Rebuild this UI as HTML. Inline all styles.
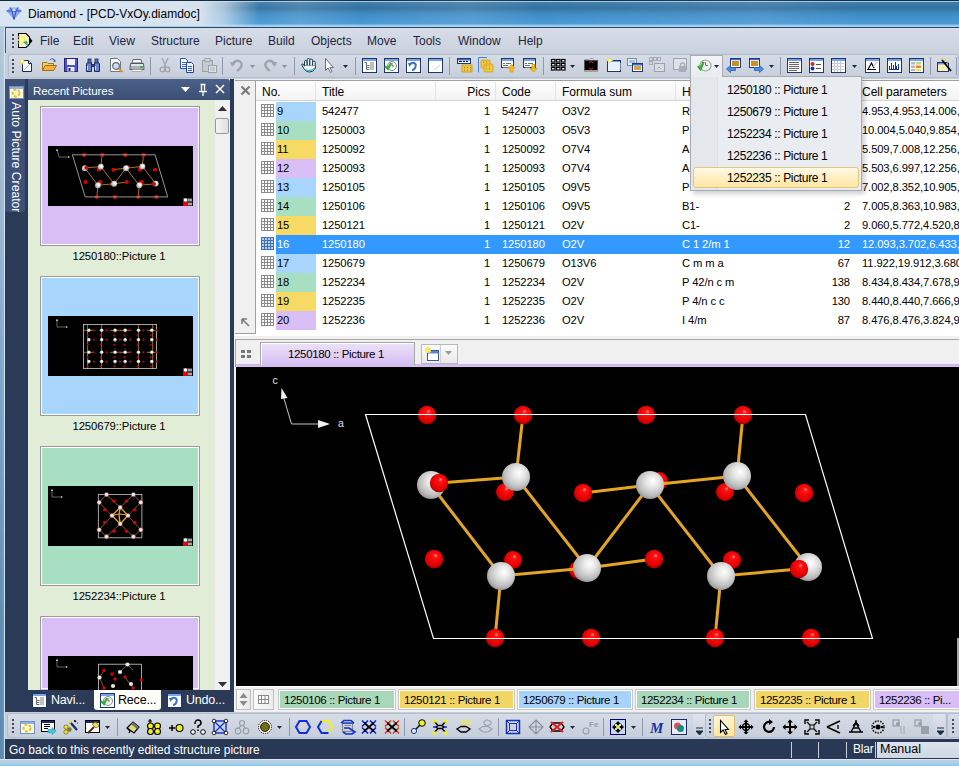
<!DOCTYPE html><html><head><meta charset="utf-8"><style>
*{margin:0;padding:0;box-sizing:border-box}
html,body{width:959px;height:766px;overflow:hidden;background:#2a3a57;font-family:"Liberation Sans",sans-serif;font-size:12px;color:#000}
.a{position:absolute}
svg{position:absolute;overflow:visible}
#title{left:0;top:0;width:959px;height:27px;background:linear-gradient(90deg,rgba(255,255,255,0) 250px,rgba(255,255,255,0.12) 300px,rgba(255,255,255,0) 360px,rgba(255,255,255,0.1) 470px,rgba(255,255,255,0) 540px,rgba(255,255,255,0.08) 760px,rgba(255,255,255,0) 860px),linear-gradient(180deg,#1a2a3a 0px,#1a2a3a 1px,#9acbe8 1px,#9acbe8 2px,#3f80ae 2px,#33729e 8px,#3f8cc4 14px,#4a9ad8 24px,#8cc4ec 25px,#a8d8f8 27px)}
#tglow{left:0;top:1px;width:260px;height:25px;background:linear-gradient(90deg,#d9e5f0 0px,#d6e3ef 200px,rgba(214,227,239,0.7) 225px,rgba(214,227,239,0) 260px)}


#title .t{left:28px;top:7px;font-size:12px;color:#000}
#frameL{left:0;top:27px;width:5px;height:739px;background:linear-gradient(90deg,rgba(255,255,255,0) 0px,rgba(255,255,255,0.08) 3.5px,#d4e8f8 4px,#c8e0f4 5px),linear-gradient(180deg,#b4c8da 0px,#a4bcd2 120px,#7ea4c6 350px,#5e8ab2 600px,#5a88b0 739px)}
#frameB{left:0;top:759px;width:959px;height:7px;background:linear-gradient(180deg,#d8e6f2 0px,#d8e6f2 1px,#bcd0e2 1px,#b4cce0 4px,#8ed0f2 6px,#7cc8ee 7px)}
#menubar{left:5px;top:27px;width:954px;height:26px;background:linear-gradient(180deg,#d8dee8,#c9d1dd);border-top:1px solid #34445f}
#menubar span{position:absolute;top:6px;color:#1b2740;font-size:12px}
#tb1{left:5px;top:53px;width:954px;height:26px;background:#c5cdda}
.tbar{border-radius:3px;background:linear-gradient(180deg,#d6dce6,#c7cfdb);border:1px solid #b4bdcb}
.grip{width:2px;height:2px;background:#3e4b60;box-shadow:0 4px #3e4b60,0 8px #3e4b60,0 12px #3e4b60}
.sep{width:1px;background:#8e9aac}
#left{left:28px;top:79px;width:202px;height:611px;background:#e1edd6}
#lhdr{left:28px;top:79px;width:202px;height:21px;background:linear-gradient(180deg,#4b6088,#3c5075);border-radius:0 3px 0 0}
#lhdr .t{left:5px;top:5px;color:#fff;font-size:11.6px;letter-spacing:-0.1px}
.card{width:160px;height:140px;border:1px solid #9a9a9a;outline:1px solid #fff;outline-offset:-2px}
.cap{width:160px;text-align:center;font-size:11.3px;letter-spacing:-0.1px;color:#000}
#lscroll{left:214px;top:100px;width:16px;height:590px;background:#f0f0f0;border-left:1px solid #e6e6e6}
#ltabs{left:28px;top:690px;width:202px;height:21px}
#doc{left:234px;top:79px;width:725px;height:633px;background:#f0f0f0}
#tbl{left:235px;top:80px;width:724px;height:256px;background:#fff;border-top:1px solid #a0a0a0}
.rt{font-size:11.2px;letter-spacing:-0.1px;white-space:nowrap}
.row span{position:absolute;top:3px}
.hd{position:absolute;top:81px;height:19px;font-size:12px;color:#000;}
#pic{left:236px;top:367px;width:723px;height:319px;background:#000}
#status{left:5px;top:739px;width:954px;height:20px;background:#283855}
#status .t{left:4px;top:4px;color:#fff;font-size:12px}
#tb2{left:5px;top:712px;width:954px;height:27px;background:#c5cdda}
</style></head><body>
<div id="title" class="a"><div id="tglow" class="a"></div><div class="t a">Diamond - [PCD-VxOy.diamdoc]</div></div>
<svg style="left:6px;top:7px" width="16" height="13" viewBox="0 0 16 13"><path d="M0.5 4L4 0.5H12L15.5 4L8 12.5Z" fill="#8aa8f0"/><path d="M0.5 4H15.5M4 0.5L6 4L8 12.5L10 4L12 0.5" stroke="#3050c8" stroke-width="1" fill="none"/><path d="M6 4L8 1L10 4" fill="#d8e4ff"/></svg>
<div id="frameL" class="a"></div>
<div id="menubar" class="a">
<span style="left:35px">File</span>
<span style="left:68px">Edit</span>
<span style="left:104px">View</span>
<span style="left:146px">Structure</span>
<span style="left:210px">Picture</span>
<span style="left:263px">Build</span>
<span style="left:306px">Objects</span>
<span style="left:362px">Move</span>
<span style="left:408px">Tools</span>
<span style="left:453px">Window</span>
<span style="left:513px">Help</span>
</div>
<div class="a" style="left:5px;top:27px;width:1px;height:26px;background:#4a5670"></div>
<div class="a grip" style="left:12px;top:34px"></div>
<svg style="left:17px;top:32px" width="16" height="16" viewBox="0 0 16 16"><path d="M1.5 1.5H9L12.5 5V12L9 15.5H1.5Z" fill="#f8f4d8" stroke="#000" stroke-width="1.1"/><path d="M12.5 5L15.5 9L12 13" fill="#000"/><path d="M5 3V13M0 8H10M1.5 4.5L8.5 11.5M8.5 4.5L1.5 11.5" stroke="#f8f040" stroke-width="1.3"/><circle cx="5" cy="8" r="2.2" fill="#fffbb0"/><path d="M6 10L11 14L10 9Z" fill="#30a0a0"/></svg>
<div id="tb1" class="a"><div class="tbar a" style="left:3px;top:1px;width:951px;height:24px"></div></div>
<div class="a grip" style="left:12px;top:59px"></div>
<svg style="left:18px;top:57px" width="16" height="16" viewBox="0 0 16 16"><path d="M4.5 3.5H10.5L13.5 6.5V14.5H4.5Z" fill="#f4f6fb" stroke="#202a50"/><path d="M10.5 3.5V6.5H13.5" fill="#c8d0e8" stroke="#202a50"/><path d="M6 13L12 7" stroke="#b0b8d8"/><path d="M4.20 4.20L7.40 4.20M4.20 4.20L5.78 5.78M4.20 4.20L4.20 7.40M4.20 4.20L2.62 5.78M4.20 4.20L1.00 4.20M4.20 4.20L2.62 2.62M4.20 4.20L4.20 1.00M4.20 4.20L5.78 2.62" stroke="#f4e040" stroke-width="1.1"/><circle cx="4.2" cy="4.2" r="1.4" fill="#fffbc0"/></svg>
<svg style="left:41px;top:57px" width="16" height="16" viewBox="0 0 16 16"><path d="M1.5 5.5H6L7 6.5H12.5V13.5H1.5Z" fill="#f0d070" stroke="#a07818"/><path d="M1.5 13.5L4 8.5H15.5L12.5 13.5Z" fill="#f6b040" stroke="#a07018"/><path d="M9 3Q12 0 14 4" fill="none" stroke="#3060b0"/><path d="M13 2L15 4.5L12.5 5Z" fill="#3060b0"/></svg>
<svg style="left:63px;top:57px" width="16" height="16" viewBox="0 0 16 16"><rect x="1.5" y="1.5" width="13" height="13" fill="#5050c8" stroke="#282878"/><rect x="4" y="2" width="8" height="6" fill="#f0f0f8"/><rect x="4.5" y="10" width="7" height="4.5" fill="#e8e8f0"/><rect x="5.5" y="11" width="2" height="3" fill="#282878"/></svg>
<svg style="left:85px;top:57px" width="16" height="16" viewBox="0 0 16 16"><path d="M2.5 5.5H6.5V14.5H1.5V7Z M9.5 5.5H13.5L14.5 7V14.5H9.5Z" fill="#6888c8" stroke="#1a2a68"/><rect x="3" y="2" width="3" height="4" fill="#5070b8" stroke="#1a2a68" stroke-width="0.8"/><rect x="10" y="2" width="3" height="4" fill="#5070b8" stroke="#1a2a68" stroke-width="0.8"/><rect x="6.5" y="7" width="3" height="3" fill="#2a3a78"/><path d="M2.5 9V13M10.5 9V13" stroke="#d8e4f8"/></svg>
<svg style="left:108px;top:57px" width="16" height="16" viewBox="0 0 16 16"><path d="M2.5 1.5H9.5L12.5 4.5V14.5H2.5Z" fill="#fafafa" stroke="#707888"/><circle cx="8" cy="9" r="3.3" fill="#d0e0f0" stroke="#606878" stroke-width="1.2"/><path d="M10.5 11.5L14.5 15" stroke="#d89030" stroke-width="2"/></svg>
<svg style="left:129px;top:57px" width="16" height="16" viewBox="0 0 16 16"><path d="M4 2.5H12L13 6H3Z" fill="#f8f8f8" stroke="#606870"/><path d="M1.5 6.5H14.5L15 12.5H1Z" fill="#e0e4ea" stroke="#505860"/><rect x="2" y="9" width="12" height="3" fill="#a8b0b8"/><rect x="11" y="9" width="2.5" height="2" fill="#30b030"/><rect x="3" y="12.5" width="10" height="2" fill="#fff" stroke="#808890" stroke-width="0.6"/></svg>
<svg style="left:157px;top:57px" width="16" height="16" viewBox="0 0 16 16"><path d="M5 1L9 10M11 1L7 10" stroke="#a0a4a8" stroke-width="1.3"/><circle cx="5.5" cy="12.5" r="2.3" fill="none" stroke="#a0a4a8" stroke-width="1.3"/><circle cx="10.5" cy="12.5" r="2.3" fill="none" stroke="#a0a4a8" stroke-width="1.3"/></svg>
<svg style="left:179px;top:57px" width="16" height="16" viewBox="0 0 16 16"><path d="M1.5 1.5H6.5L8.5 3.5V11.5H1.5Z" fill="#f8f8ff" stroke="#3050a0"/><path d="M3 5.5H7M3 7.5H7M3 9.5H7" stroke="#4070c0"/><path d="M7.5 5.5H12.5L14.5 7.5V15.5H7.5Z" fill="#f0f4ff" stroke="#2040a0"/><path d="M9 9.5H13M9 11.5H13M9 13.5H13" stroke="#3060c0"/></svg>
<svg style="left:201px;top:57px" width="16" height="16" viewBox="0 0 16 16"><rect x="1.5" y="3.5" width="10" height="11" fill="#c8ccd2" stroke="#9aa0a8"/><rect x="4" y="1.5" width="5" height="3" fill="#d8dce0" stroke="#9aa0a8"/><rect x="7.5" y="8.5" width="8" height="7" fill="#e0e4e8" stroke="#9aa0a8"/><path d="M9 11H14M9 13H14" stroke="#a8aeb6"/></svg>
<svg style="left:229px;top:57px" width="16" height="16" viewBox="0 0 16 16"><path d="M4 8Q5 3 10 4Q14 6 12 10Q10 13 8 14" fill="none" stroke="#a0a6ae" stroke-width="2.4"/><path d="M1 5L7 5L3 10Z" fill="#a0a6ae"/></svg>
<svg style="left:262px;top:57px" width="16" height="16" viewBox="0 0 16 16"><path d="M12 8Q11 3 6 4Q2 6 4 10Q6 13 8 14" fill="none" stroke="#a0a6ae" stroke-width="2.4"/><path d="M15 5L9 5L13 10Z" fill="#a0a6ae"/></svg>
<svg style="left:301px;top:57px" width="16" height="16" viewBox="0 0 16 16"><g fill="#f8f6ea" stroke="#0a3a5a" stroke-width="1"><rect x="3.5" y="3.5" width="2.6" height="8" rx="1.3"/><rect x="6.2" y="1.5" width="2.6" height="9" rx="1.3"/><rect x="8.9" y="2" width="2.6" height="9" rx="1.3"/><rect x="11.6" y="4" width="2.6" height="8" rx="1.3"/><path d="M3.5 9L1.8 7Q0.6 6.6 0.8 8L3.5 12.5Q5 15 8.5 15Q13 15 14.2 11V9H3.5Z"/></g><path d="M4 9.5H14" stroke="#f8f6ea" stroke-width="1.6"/><path d="M4 12.5Q8 15.5 13.5 11.5" stroke="#30b8d8" stroke-width="1.4" fill="none"/></svg>
<svg style="left:321px;top:57px" width="16" height="16" viewBox="0 0 16 16"><path d="M4.5 1.5V13.5L7 11L9.5 15.5L11 14.5L9 10.5H12.5Z" fill="#f8f8f8" stroke="#6a7078"/></svg>
<svg style="left:361px;top:57px" width="16" height="16" viewBox="0 0 16 16"><rect x="1.5" y="1.5" width="14" height="14" fill="#ffffff" stroke="#20356a"/><rect x="2" y="2" width="13" height="2" fill="#7aa4e4"/><path d="M3.5 5.5H5.5V12.5H8.5M5.5 8.5H8.5M5.5 10.5H8.5" fill="none" stroke="#707070"/><rect x="9" y="5.5" width="4" height="1" fill="#808080"/><rect x="9" y="7.5" width="4" height="1" fill="#808080"/><rect x="9" y="9.5" width="4" height="1" fill="#808080"/><rect x="9" y="11.5" width="4" height="1" fill="#808080"/></svg>
<svg style="left:383px;top:57px" width="16" height="16" viewBox="0 0 16 16"><rect x="1.5" y="1.5" width="14" height="14" fill="#ffffff" stroke="#20356a"/><rect x="2" y="2" width="13" height="2" fill="#7aa4e4"/><circle cx="9" cy="9" r="4.5" fill="#f4f4f4" stroke="#909090"/><path d="M9 6V9H11" stroke="#707070" fill="none"/><path d="M2 9L5 12L8 6" stroke="#30b030" stroke-width="2.2" fill="none"/></svg>
<svg style="left:405px;top:57px" width="16" height="16" viewBox="0 0 16 16"><rect x="1.5" y="1.5" width="14" height="14" fill="#ffffff" stroke="#20356a"/><rect x="2" y="2" width="13" height="2" fill="#7aa4e4"/><path d="M5 8Q6 5 9 6Q12 7 10 11Q9 13 7 13" fill="none" stroke="#3a70c8" stroke-width="2"/><path d="M3 6L7 6L4.5 10Z" fill="#3a70c8"/></svg>
<svg style="left:427px;top:57px" width="16" height="16" viewBox="0 0 16 16"><rect x="1.5" y="1.5" width="14" height="14" fill="#ffffff" stroke="#20356a"/><rect x="2" y="2" width="13" height="2" fill="#7aa4e4"/><path d="M7 13L13 8" stroke="#c8ccd8"/></svg>
<svg style="left:456px;top:57px" width="16" height="16" viewBox="0 0 16 16"><rect x="1.5" y="1.5" width="13" height="5" fill="#fff" stroke="#1e3a78"/><rect x="2" y="2" width="12" height="1.5" fill="#3a6fd0"/><path d="M3 4.5H6M7 4.5H9M10 4.5H12" stroke="#202020"/><rect x="6" y="8" width="10" height="7" fill="#f0c840" stroke="#c09818" stroke-width="0.8"/><path d="M8 10.5H9M11 10.5H12M14 10.5H15M8 13H9M11 13H12M14 13H15" stroke="#a07010"/></svg>
<svg style="left:478px;top:57px" width="16" height="16" viewBox="0 0 16 16"><path d="M0.5 0.5V15.5" stroke="#4a80e0"/><path d="M0.5 0.5H9" stroke="#4a80e0"/><rect x="3" y="3" width="9" height="8" rx="1" fill="#f0c840" stroke="#d0a020" stroke-width="0.8"/><rect x="6" y="7" width="9" height="8" rx="1" fill="#f0c840" stroke="#d0a020" stroke-width="0.8"/><path d="M5 5H6M8 5H9M8 9H9M11 9H12M8 12H9M11 12H12" stroke="#b08010"/></svg>
<svg style="left:500px;top:57px" width="16" height="16" viewBox="0 0 16 16"><rect x="1.5" y="1.5" width="12" height="9" fill="#ffffff" stroke="#20356a"/><rect x="2" y="2" width="11" height="2" fill="#7aa4e4"/><path d="M3 6.5H5M6 6.5H11M3 8.5H8M3 10.5H8" stroke="#707070"/><path d="M8 11L11.5 7.5L15 11H13V15H10V11Z" fill="#f0c020" stroke="#d09810" stroke-width="0.7"/></svg>
<svg style="left:522px;top:57px" width="16" height="16" viewBox="0 0 16 16"><rect x="1.5" y="1.5" width="12" height="9" fill="#ffffff" stroke="#20356a"/><rect x="2" y="2" width="11" height="2" fill="#7aa4e4"/><path d="M3 6.5H5M6 6.5H11M3 8.5H8M3 10.5H8" stroke="#707070"/><path d="M8 11.5L11.5 15L15 11.5H13V7.5H10V11.5Z" fill="#f0c020" stroke="#d09810" stroke-width="0.7"/></svg>
<svg style="left:550px;top:57px" width="16" height="16" viewBox="0 0 16 16"><rect x="1.5" y="2.5" width="3.5" height="2.5" fill="#fff" stroke="#000" stroke-width="1.2"/><rect x="1.5" y="6.5" width="3.5" height="2.5" fill="#fff" stroke="#000" stroke-width="1.2"/><rect x="1.5" y="10.5" width="3.5" height="2.5" fill="#fff" stroke="#000" stroke-width="1.2"/><rect x="6.5" y="2.5" width="3.5" height="2.5" fill="#fff" stroke="#000" stroke-width="1.2"/><rect x="6.5" y="6.5" width="3.5" height="2.5" fill="#fff" stroke="#000" stroke-width="1.2"/><rect x="6.5" y="10.5" width="3.5" height="2.5" fill="#fff" stroke="#000" stroke-width="1.2"/><rect x="11.5" y="2.5" width="3.5" height="2.5" fill="#fff" stroke="#000" stroke-width="1.2"/><rect x="11.5" y="6.5" width="3.5" height="2.5" fill="#fff" stroke="#000" stroke-width="1.2"/><rect x="11.5" y="10.5" width="3.5" height="2.5" fill="#fff" stroke="#000" stroke-width="1.2"/></svg>
<svg style="left:583px;top:57px" width="16" height="16" viewBox="0 0 16 16"><path d="M1.5 2.5H6L7 1.5H10L11 2.5" fill="#a8c8f0" stroke="#8aa8d0"/><rect x="1.5" y="3.5" width="13" height="10" fill="#000" stroke="#505050"/><rect x="1" y="13" width="14" height="2" fill="#a0a0a0"/><path d="M6 6L8 4.5L10 6M6 11L8 12.5L10 11" stroke="#e02020" fill="none"/></svg>
<svg style="left:606px;top:57px" width="16" height="16" viewBox="0 0 16 16"><rect x="1.5" y="3.5" width="13" height="11" fill="#ffffff" stroke="#20356a"/><rect x="2" y="4" width="12" height="2" fill="#7aa4e4"/><path d="M3 6H14V13" stroke="#c8d8f0" fill="none"/><rect x="2" y="5" width="12" height="8" fill="#e8f0fc"/><path d="M3.50 3.50L6.70 3.50M3.50 3.50L5.08 5.08M3.50 3.50L3.50 6.70M3.50 3.50L1.92 5.08M3.50 3.50L0.30 3.50M3.50 3.50L1.92 1.92M3.50 3.50L3.50 0.30M3.50 3.50L5.08 1.92" stroke="#f4e040" stroke-width="1.1"/><circle cx="3.5" cy="3.5" r="1.4" fill="#fffbc0"/></svg>
<svg style="left:627px;top:57px" width="16" height="16" viewBox="0 0 16 16"><rect x="0.5" y="1.5" width="9" height="7" fill="#e8eef8" stroke="#808890"/><rect x="2" y="3" width="6" height="3" fill="#a0c0e8"/><rect x="5.5" y="6.5" width="10" height="8" fill="#fff" stroke="#1e3a78"/><rect x="6" y="7" width="9" height="1.5" fill="#3a6fd0"/><rect x="7" y="9" width="7" height="4" fill="#d8a040"/></svg>
<svg style="left:649px;top:57px" width="16" height="16" viewBox="0 0 16 16"><g fill="none" stroke="#a8acb2"><rect x="0.5" y="0.5" width="3" height="3"/><rect x="4.5" y="0.5" width="3" height="3"/><rect x="0.5" y="4.5" width="3" height="3"/><rect x="8.5" y="0.5" width="3" height="3"/></g><rect x="5.5" y="6.5" width="10" height="8" fill="#d8dce0" stroke="#9aa0a8"/><path d="M8 12L10 10L12 12" stroke="#a8aeb6" fill="none"/></svg>
<svg style="left:672px;top:57px" width="16" height="16" viewBox="0 0 16 16"><rect x="1.5" y="1.5" width="13" height="11" fill="#dfe2e6" stroke="#a0a6ae"/><rect x="7" y="9" width="7" height="6" fill="#a8aeb6"/><path d="M8.5 9V7Q10.5 5 12.5 7V9" fill="none" stroke="#a8aeb6" stroke-width="1.4"/></svg>
<svg style="left:726px;top:57px" width="16" height="16" viewBox="0 0 16 16"><rect x="4.5" y="1.5" width="10" height="9" fill="#fffbe8" stroke="#1e3a78"/><rect x="5" y="2" width="9" height="1.2" fill="#3a6fd0"/><rect x="6" y="4" width="7" height="5" fill="#c89028"/><path d="M0.5 12L4.5 8.5V10.5H9.5V13.5H4.5V15.5Z" fill="#4a90e0" stroke="#2a60b0" stroke-width="0.8"/></svg>
<svg style="left:748px;top:57px" width="16" height="16" viewBox="0 0 16 16"><rect x="1.5" y="1.5" width="10" height="9" fill="#fffbe8" stroke="#1e3a78"/><rect x="2" y="2" width="9" height="1.2" fill="#3a6fd0"/><rect x="3" y="4" width="7" height="5" fill="#c89028"/><path d="M15.5 12L11.5 8.5V10.5H6.5V13.5H11.5V15.5Z" fill="#4a90e0" stroke="#2a60b0" stroke-width="0.8"/></svg>
<svg style="left:786px;top:57px" width="16" height="16" viewBox="0 0 16 16"><rect x="1.5" y="1.5" width="14" height="14" fill="#ffffff" stroke="#20356a"/><rect x="2" y="2" width="13" height="2" fill="#7aa4e4"/><path d="M3 5.5H13M3 7.5H13M3 9.5H13M3 11.5H13M3 13.5H11" stroke="#686868"/></svg>
<svg style="left:808px;top:57px" width="16" height="16" viewBox="0 0 16 16"><rect x="1.5" y="1.5" width="14" height="14" fill="#ffffff" stroke="#20356a"/><rect x="2" y="2" width="13" height="2" fill="#7aa4e4"/><circle cx="4.5" cy="7" r="2" fill="#e02020"/><circle cx="4.5" cy="11.5" r="2" fill="#1030c0"/><path d="M8 7.5H13M8 11.5H13" stroke="#505050" stroke-width="1.2"/></svg>
<svg style="left:830px;top:57px" width="16" height="16" viewBox="0 0 16 16"><rect x="1.5" y="1.5" width="14" height="14" fill="#fafafc" stroke="#20356a"/><rect x="2" y="2" width="13" height="2" fill="#7aa4e4"/><path d="M2 6.5H14M2 9.5H14M2 12.5H14M4.5 4V15M7.5 4V15M10.5 4V15" stroke="#c8cad8"/></svg>
<svg style="left:864px;top:57px" width="16" height="16" viewBox="0 0 16 16"><rect x="1.5" y="1.5" width="14" height="14" fill="#ffffff" stroke="#20356a"/><rect x="2" y="2" width="13" height="2" fill="#7aa4e4"/><path d="M3 12.5H12M4 12.5L7.5 6L10 11" stroke="#000" fill="none" stroke-width="1.2"/><path d="M9 10L13 5" stroke="#b0b8d0"/></svg>
<svg style="left:886px;top:57px" width="16" height="16" viewBox="0 0 16 16"><rect x="1.5" y="1.5" width="14" height="14" fill="#ffffff" stroke="#20356a"/><rect x="2" y="2" width="13" height="2" fill="#7aa4e4"/><path d="M3 12.5H13M3.5 12V9M5.5 12V6M7.5 12V8M9.5 12V5M10.5 12V9M12.5 12V7" stroke="#1030c0" fill="none"/></svg>
<svg style="left:908px;top:57px" width="16" height="16" viewBox="0 0 16 16"><rect x="1.5" y="1.5" width="14" height="14" fill="#ffffff" stroke="#20356a"/><rect x="2" y="2" width="13" height="2" fill="#7aa4e4"/><rect x="3" y="5" width="4" height="2.5" fill="#b8b8b8"/><rect x="3" y="8.5" width="4" height="2.5" fill="#b8b8b8"/><rect x="3" y="12" width="4" height="2" fill="#b8b8b8"/><rect x="8" y="5" width="5" height="2.5" fill="#b8d890"/><rect x="8" y="8.5" width="5" height="2.5" fill="#f08820"/><rect x="8" y="12" width="5" height="2" fill="#e8e070"/></svg>
<svg style="left:936px;top:57px" width="16" height="16" viewBox="0 0 16 16"><rect x="1.5" y="5.5" width="11" height="9" fill="#f8f0c0" stroke="#1e3a78"/><rect x="2" y="6" width="10" height="1.5" fill="#7090e0"/><path d="M5 12L7 9L9 12L6 10H8Z" fill="#f0e050"/><path d="M6 3L15 14" stroke="#000" stroke-width="1.8"/><circle cx="6" cy="2" r="1" fill="#f0c020"/><circle cx="9" cy="3" r="1" fill="#f0c020"/><circle cx="12" cy="5" r="1" fill="#f0c020"/></svg>
<div class="a sep" style="left:150px;top:57px;height:18px"></div>
<div class="a sep" style="left:222px;top:57px;height:18px"></div>
<div class="a sep" style="left:294px;top:57px;height:18px"></div>
<div class="a sep" style="left:355px;top:57px;height:18px"></div>
<div class="a sep" style="left:449px;top:57px;height:18px"></div>
<div class="a sep" style="left:543px;top:57px;height:18px"></div>
<div class="a sep" style="left:780px;top:57px;height:18px"></div>
<div class="a sep" style="left:930px;top:57px;height:18px"></div>
<div class="a sep" style="left:956px;top:57px;height:18px"></div>
<svg style="left:250px;top:65px" width="5" height="3" viewBox="0 0 5 3"><path d="M0 0H5L2.5 3Z" fill="#8a929c"/></svg>
<svg style="left:282px;top:65px" width="5" height="3" viewBox="0 0 5 3"><path d="M0 0H5L2.5 3Z" fill="#8a929c"/></svg>
<svg style="left:343px;top:65px" width="5" height="3" viewBox="0 0 5 3"><path d="M0 0H5L2.5 3Z" fill="#1a2a48"/></svg>
<svg style="left:570px;top:65px" width="5" height="3" viewBox="0 0 5 3"><path d="M0 0H5L2.5 3Z" fill="#1a2a48"/></svg>
<svg style="left:769px;top:65px" width="5" height="3" viewBox="0 0 5 3"><path d="M0 0H5L2.5 3Z" fill="#1a2a48"/></svg>
<svg style="left:852px;top:65px" width="5" height="3" viewBox="0 0 5 3"><path d="M0 0H5L2.5 3Z" fill="#1a2a48"/></svg>
<div class="a" style="left:5px;top:79px;width:20px;height:133px;background:#3d5077;border-radius:0 0 2px 2px"></div>
<svg style="left:8px;top:84px" width="16" height="16" viewBox="0 0 16 16"><rect x="1.5" y="2.5" width="14" height="12" fill="#fff8e0" stroke="#7090c0"/><rect x="2" y="3" width="13" height="2" fill="#8ab0e8"/><circle cx="8" cy="9" r="3.5" fill="none" stroke="#e8c020" stroke-width="2" stroke-dasharray="3 1.5"/></svg>
<div class="a" style="left:9px;top:102px;width:14px;height:110px;"><div style="position:absolute;left:-48px;top:48px;width:110px;height:14px;transform:rotate(90deg);color:#fff;font-size:12.2px;white-space:nowrap">Auto Picture Creator</div></div>
<div id="left" class="a"></div>
<div id="lhdr" class="a"><div class="t a">Recent Pictures</div></div>
<svg style="left:181px;top:87px" width="9" height="5"><path d="M0 0H9L4.5 5Z" fill="#fff"/></svg>
<svg style="left:198px;top:83px" width="10" height="13"><path d="M2.5 1.5H7.5M3.5 1.5V7.5M6.5 1.5V7.5M1 8.5H9M5 8.5V13" stroke="#fff" stroke-width="1.3" fill="none"/></svg>
<svg style="left:215px;top:84px" width="10" height="10"><path d="M1 1L9 9M9 1L1 9" stroke="#fff" stroke-width="1.5"/></svg>
<div class="a card" style="left:40px;top:106px;height:140px;background:#d8bef5;"></div>
<svg style="left:48px;top:146px" width="145" height="60" viewBox="0 0 145 60"><rect width="145" height="60" fill="#000"/>
<circle cx="50.72" cy="23.46" r="2.2" fill="#d00"/>
<circle cx="79.67" cy="21.4" r="2.2" fill="#d00"/>
<circle cx="64.44" cy="38.13" r="2.2" fill="#d00"/>
<circle cx="92.08" cy="23.46" r="2.2" fill="#d00"/>
<circle cx="52.22" cy="36.25" r="2.2" fill="#d00"/>
<circle cx="93.4" cy="36.25" r="2.2" fill="#d00"/>
<line x1="54.1" y1="8.99" x2="52.79" y2="20.64" stroke="#b88020" stroke-width="0.9"/>
<line x1="38.31" y1="21.77" x2="52.79" y2="20.64" stroke="#b88020" stroke-width="0.9"/>
<line x1="36.81" y1="22.15" x2="49.97" y2="39.26" stroke="#b88020" stroke-width="0.9"/>
<line x1="52.79" y1="20.64" x2="66.14" y2="37.75" stroke="#b88020" stroke-width="0.9"/>
<line x1="49.97" y1="39.26" x2="66.14" y2="37.75" stroke="#b88020" stroke-width="0.9"/>
<line x1="49.97" y1="39.26" x2="48.84" y2="50.91" stroke="#b88020" stroke-width="0.9"/>
<line x1="65.38" y1="23.65" x2="77.98" y2="22.15" stroke="#b88020" stroke-width="0.9"/>
<line x1="77.98" y1="22.15" x2="66.14" y2="37.75" stroke="#b88020" stroke-width="0.9"/>
<line x1="66.14" y1="37.75" x2="78.73" y2="36.06" stroke="#b88020" stroke-width="0.9"/>
<line x1="95.46" y1="8.99" x2="94.34" y2="20.46" stroke="#b88020" stroke-width="0.9"/>
<line x1="77.98" y1="22.15" x2="94.34" y2="20.46" stroke="#b88020" stroke-width="0.9"/>
<line x1="94.34" y1="20.46" x2="107.68" y2="37.56" stroke="#b88020" stroke-width="0.9"/>
<line x1="77.98" y1="22.15" x2="91.33" y2="39.26" stroke="#b88020" stroke-width="0.9"/>
<line x1="91.33" y1="39.26" x2="105.99" y2="37.94" stroke="#b88020" stroke-width="0.9"/>
<line x1="91.33" y1="39.26" x2="90.2" y2="50.91" stroke="#b88020" stroke-width="0.9"/>
<circle cx="36.81" cy="22.15" r="2.9" fill="#b8b8b8"/><circle cx="37.21" cy="21.75" r="2" fill="#e8e8e8"/><circle cx="37.410000000000004" cy="21.45" r="0.9" fill="#fff"/>
<circle cx="52.79" cy="20.64" r="2.9" fill="#b8b8b8"/><circle cx="53.19" cy="20.240000000000002" r="2" fill="#e8e8e8"/><circle cx="53.39" cy="19.94" r="0.9" fill="#fff"/>
<circle cx="49.97" cy="39.26" r="2.9" fill="#b8b8b8"/><circle cx="50.37" cy="38.86" r="2" fill="#e8e8e8"/><circle cx="50.57" cy="38.559999999999995" r="0.9" fill="#fff"/>
<circle cx="66.14" cy="37.75" r="2.9" fill="#b8b8b8"/><circle cx="66.54" cy="37.35" r="2" fill="#e8e8e8"/><circle cx="66.74" cy="37.05" r="0.9" fill="#fff"/>
<circle cx="77.98" cy="22.15" r="2.9" fill="#b8b8b8"/><circle cx="78.38000000000001" cy="21.75" r="2" fill="#e8e8e8"/><circle cx="78.58" cy="21.45" r="0.9" fill="#fff"/>
<circle cx="94.34" cy="20.46" r="2.9" fill="#b8b8b8"/><circle cx="94.74000000000001" cy="20.060000000000002" r="2" fill="#e8e8e8"/><circle cx="94.94" cy="19.76" r="0.9" fill="#fff"/>
<circle cx="91.33" cy="39.26" r="2.9" fill="#b8b8b8"/><circle cx="91.73" cy="38.86" r="2" fill="#e8e8e8"/><circle cx="91.92999999999999" cy="38.559999999999995" r="0.9" fill="#fff"/>
<circle cx="107.68" cy="37.56" r="2.9" fill="#b8b8b8"/><circle cx="108.08000000000001" cy="37.160000000000004" r="2" fill="#e8e8e8"/><circle cx="108.28" cy="36.86" r="0.9" fill="#fff"/>
<circle cx="36.06" cy="8.99" r="2" fill="#d00"/>
<circle cx="54.1" cy="8.99" r="2" fill="#d00"/>
<circle cx="77.23" cy="8.99" r="2" fill="#d00"/>
<circle cx="95.46" cy="8.99" r="2" fill="#d00"/>
<circle cx="38.31" cy="21.77" r="2" fill="#d00"/>
<circle cx="65.38" cy="23.65" r="2" fill="#d00"/>
<circle cx="106.93" cy="23.65" r="2" fill="#d00"/>
<circle cx="37.37" cy="36.06" r="2" fill="#d00"/>
<circle cx="78.73" cy="36.06" r="2" fill="#d00"/>
<circle cx="105.99" cy="37.94" r="2" fill="#d00"/>
<circle cx="48.84" cy="50.91" r="2" fill="#d00"/>
<circle cx="66.89" cy="50.91" r="2" fill="#d00"/>
<circle cx="90.2" cy="50.91" r="2" fill="#d00"/>
<circle cx="108.25" cy="50.91" r="2" fill="#d00"/>
<path d="M24.4 8.8H107.12L119.72 50.91H37.18Z" fill="none" stroke="#bbb" stroke-width="0.8"/>
<path d="M9 3L11 11H20" stroke="#aaa" stroke-width="0.6" fill="none"/><path d="M20 10L22 11L20 12Z M8 5L9 3L10 5Z" fill="#ddd"/>
<rect x="135" y="52" width="9" height="8" fill="#444"/><circle cx="137.5" cy="54" r="1.8" fill="#fff"/><rect x="135" y="56" width="4" height="4" fill="#e00"/><path d="M140 54H144M140 58H144" stroke="#fff" stroke-width="1"/>
</svg>
<div class="a cap" style="left:39px;top:250px">1250180::Picture 1</div>
<div class="a card" style="left:40px;top:276px;height:140px;background:#a8d5fb;"></div>
<svg style="left:48px;top:316px" width="145" height="60" viewBox="0 0 145 60"><rect width="145" height="60" fill="#000"/>
<line x1="39.599999999999994" y1="8" x2="39.599999999999994" y2="53" stroke="#b07818" stroke-width="0.9"/>
<line x1="53.599999999999994" y1="8" x2="53.599999999999994" y2="53" stroke="#b07818" stroke-width="0.9"/>
<line x1="90.4" y1="8" x2="90.4" y2="53" stroke="#b07818" stroke-width="0.9"/>
<line x1="104.69999999999999" y1="8" x2="104.69999999999999" y2="53" stroke="#b07818" stroke-width="0.9"/>
<line x1="67" y1="8" x2="67" y2="53" stroke="#806010" stroke-width="0.6" stroke-dasharray="2 2"/>
<line x1="77.1" y1="8" x2="77.1" y2="53" stroke="#806010" stroke-width="0.6" stroke-dasharray="2 2"/>
<rect x="35.5" y="8.5" width="73" height="44" fill="none" stroke="#ccc" stroke-width="0.8"/>
<line x1="40.8" y1="14.300000000000011" x2="45.8" y2="14.300000000000011" stroke="#b07818" stroke-width="0.9"/>
<line x1="40.8" y1="14.300000000000011" x2="35.8" y2="14.300000000000011" stroke="#b07818" stroke-width="0.9"/>
<circle cx="40.8" cy="14.300000000000011" r="1.8" fill="#c8c8c8"/><circle cx="41.099999999999994" cy="14.00000000000001" r="1" fill="#fff"/>
<circle cx="45.8" cy="14.300000000000011" r="1.1" fill="#c00"/>
<circle cx="39.8" cy="19.30000000000001" r="1.0" fill="#a00"/>
<circle cx="40.8" cy="23.69999999999999" r="1.8" fill="#c8c8c8"/><circle cx="41.099999999999994" cy="23.399999999999988" r="1" fill="#fff"/>
<circle cx="45.8" cy="23.69999999999999" r="1.1" fill="#c00"/>
<circle cx="39.8" cy="28.69999999999999" r="1.0" fill="#a00"/>
<line x1="40.8" y1="36.30000000000001" x2="45.8" y2="36.30000000000001" stroke="#b07818" stroke-width="0.9"/>
<line x1="40.8" y1="36.30000000000001" x2="35.8" y2="36.30000000000001" stroke="#b07818" stroke-width="0.9"/>
<circle cx="40.8" cy="36.30000000000001" r="1.8" fill="#c8c8c8"/><circle cx="41.099999999999994" cy="36.000000000000014" r="1" fill="#fff"/>
<circle cx="45.8" cy="36.30000000000001" r="1.1" fill="#c00"/>
<circle cx="39.8" cy="41.30000000000001" r="1.0" fill="#a00"/>
<circle cx="40.8" cy="45.60000000000002" r="1.8" fill="#c8c8c8"/><circle cx="41.099999999999994" cy="45.300000000000026" r="1" fill="#fff"/>
<circle cx="45.8" cy="45.60000000000002" r="1.1" fill="#c00"/>
<circle cx="39.8" cy="50.60000000000002" r="1.0" fill="#a00"/>
<circle cx="53.599999999999994" cy="14.300000000000011" r="1.8" fill="#c8c8c8"/><circle cx="53.89999999999999" cy="14.00000000000001" r="1" fill="#fff"/>
<circle cx="58.599999999999994" cy="14.300000000000011" r="1.1" fill="#c00"/>
<circle cx="52.599999999999994" cy="19.30000000000001" r="1.0" fill="#a00"/>
<circle cx="53.599999999999994" cy="23.69999999999999" r="1.8" fill="#c8c8c8"/><circle cx="53.89999999999999" cy="23.399999999999988" r="1" fill="#fff"/>
<circle cx="58.599999999999994" cy="23.69999999999999" r="1.1" fill="#c00"/>
<circle cx="52.599999999999994" cy="28.69999999999999" r="1.0" fill="#a00"/>
<circle cx="53.599999999999994" cy="36.30000000000001" r="1.8" fill="#c8c8c8"/><circle cx="53.89999999999999" cy="36.000000000000014" r="1" fill="#fff"/>
<circle cx="58.599999999999994" cy="36.30000000000001" r="1.1" fill="#c00"/>
<circle cx="52.599999999999994" cy="41.30000000000001" r="1.0" fill="#a00"/>
<circle cx="53.599999999999994" cy="45.60000000000002" r="1.8" fill="#c8c8c8"/><circle cx="53.89999999999999" cy="45.300000000000026" r="1" fill="#fff"/>
<circle cx="58.599999999999994" cy="45.60000000000002" r="1.1" fill="#c00"/>
<circle cx="52.599999999999994" cy="50.60000000000002" r="1.0" fill="#a00"/>
<line x1="67" y1="14.300000000000011" x2="72" y2="14.300000000000011" stroke="#b07818" stroke-width="0.9"/>
<line x1="67" y1="14.300000000000011" x2="62" y2="14.300000000000011" stroke="#b07818" stroke-width="0.9"/>
<circle cx="67" cy="14.300000000000011" r="1.8" fill="#c8c8c8"/><circle cx="67.3" cy="14.00000000000001" r="1" fill="#fff"/>
<circle cx="72" cy="14.300000000000011" r="1.1" fill="#c00"/>
<circle cx="66" cy="19.30000000000001" r="1.0" fill="#a00"/>
<circle cx="67" cy="23.69999999999999" r="1.8" fill="#c8c8c8"/><circle cx="67.3" cy="23.399999999999988" r="1" fill="#fff"/>
<circle cx="72" cy="23.69999999999999" r="1.1" fill="#c00"/>
<circle cx="66" cy="28.69999999999999" r="1.0" fill="#a00"/>
<line x1="67" y1="36.30000000000001" x2="72" y2="36.30000000000001" stroke="#b07818" stroke-width="0.9"/>
<line x1="67" y1="36.30000000000001" x2="62" y2="36.30000000000001" stroke="#b07818" stroke-width="0.9"/>
<circle cx="67" cy="36.30000000000001" r="1.8" fill="#c8c8c8"/><circle cx="67.3" cy="36.000000000000014" r="1" fill="#fff"/>
<circle cx="72" cy="36.30000000000001" r="1.1" fill="#c00"/>
<circle cx="66" cy="41.30000000000001" r="1.0" fill="#a00"/>
<circle cx="67" cy="45.60000000000002" r="1.8" fill="#c8c8c8"/><circle cx="67.3" cy="45.300000000000026" r="1" fill="#fff"/>
<circle cx="72" cy="45.60000000000002" r="1.1" fill="#c00"/>
<circle cx="66" cy="50.60000000000002" r="1.0" fill="#a00"/>
<line x1="77.1" y1="14.300000000000011" x2="82.1" y2="14.300000000000011" stroke="#b07818" stroke-width="0.9"/>
<line x1="77.1" y1="14.300000000000011" x2="72.1" y2="14.300000000000011" stroke="#b07818" stroke-width="0.9"/>
<circle cx="77.1" cy="14.300000000000011" r="1.8" fill="#c8c8c8"/><circle cx="77.39999999999999" cy="14.00000000000001" r="1" fill="#fff"/>
<circle cx="82.1" cy="14.300000000000011" r="1.1" fill="#c00"/>
<circle cx="76.1" cy="19.30000000000001" r="1.0" fill="#a00"/>
<circle cx="77.1" cy="23.69999999999999" r="1.8" fill="#c8c8c8"/><circle cx="77.39999999999999" cy="23.399999999999988" r="1" fill="#fff"/>
<circle cx="82.1" cy="23.69999999999999" r="1.1" fill="#c00"/>
<circle cx="76.1" cy="28.69999999999999" r="1.0" fill="#a00"/>
<line x1="77.1" y1="36.30000000000001" x2="82.1" y2="36.30000000000001" stroke="#b07818" stroke-width="0.9"/>
<line x1="77.1" y1="36.30000000000001" x2="72.1" y2="36.30000000000001" stroke="#b07818" stroke-width="0.9"/>
<circle cx="77.1" cy="36.30000000000001" r="1.8" fill="#c8c8c8"/><circle cx="77.39999999999999" cy="36.000000000000014" r="1" fill="#fff"/>
<circle cx="82.1" cy="36.30000000000001" r="1.1" fill="#c00"/>
<circle cx="76.1" cy="41.30000000000001" r="1.0" fill="#a00"/>
<circle cx="77.1" cy="45.60000000000002" r="1.8" fill="#c8c8c8"/><circle cx="77.39999999999999" cy="45.300000000000026" r="1" fill="#fff"/>
<circle cx="82.1" cy="45.60000000000002" r="1.1" fill="#c00"/>
<circle cx="76.1" cy="50.60000000000002" r="1.0" fill="#a00"/>
<circle cx="90.4" cy="14.300000000000011" r="1.8" fill="#c8c8c8"/><circle cx="90.7" cy="14.00000000000001" r="1" fill="#fff"/>
<circle cx="95.4" cy="14.300000000000011" r="1.1" fill="#c00"/>
<circle cx="89.4" cy="19.30000000000001" r="1.0" fill="#a00"/>
<circle cx="90.4" cy="23.69999999999999" r="1.8" fill="#c8c8c8"/><circle cx="90.7" cy="23.399999999999988" r="1" fill="#fff"/>
<circle cx="95.4" cy="23.69999999999999" r="1.1" fill="#c00"/>
<circle cx="89.4" cy="28.69999999999999" r="1.0" fill="#a00"/>
<circle cx="90.4" cy="36.30000000000001" r="1.8" fill="#c8c8c8"/><circle cx="90.7" cy="36.000000000000014" r="1" fill="#fff"/>
<circle cx="95.4" cy="36.30000000000001" r="1.1" fill="#c00"/>
<circle cx="89.4" cy="41.30000000000001" r="1.0" fill="#a00"/>
<circle cx="90.4" cy="45.60000000000002" r="1.8" fill="#c8c8c8"/><circle cx="90.7" cy="45.300000000000026" r="1" fill="#fff"/>
<circle cx="95.4" cy="45.60000000000002" r="1.1" fill="#c00"/>
<circle cx="89.4" cy="50.60000000000002" r="1.0" fill="#a00"/>
<line x1="103.69999999999999" y1="14.300000000000011" x2="98.69999999999999" y2="14.300000000000011" stroke="#b07818" stroke-width="0.9"/>
<line x1="103.69999999999999" y1="14.300000000000011" x2="108.69999999999999" y2="14.300000000000011" stroke="#b07818" stroke-width="0.9"/>
<circle cx="103.69999999999999" cy="14.300000000000011" r="1.8" fill="#c8c8c8"/><circle cx="103.99999999999999" cy="14.00000000000001" r="1" fill="#fff"/>
<circle cx="108.69999999999999" cy="14.300000000000011" r="1.1" fill="#c00"/>
<circle cx="102.69999999999999" cy="19.30000000000001" r="1.0" fill="#a00"/>
<circle cx="103.69999999999999" cy="23.69999999999999" r="1.8" fill="#c8c8c8"/><circle cx="103.99999999999999" cy="23.399999999999988" r="1" fill="#fff"/>
<circle cx="108.69999999999999" cy="23.69999999999999" r="1.1" fill="#c00"/>
<circle cx="102.69999999999999" cy="28.69999999999999" r="1.0" fill="#a00"/>
<line x1="103.69999999999999" y1="36.30000000000001" x2="98.69999999999999" y2="36.30000000000001" stroke="#b07818" stroke-width="0.9"/>
<line x1="103.69999999999999" y1="36.30000000000001" x2="108.69999999999999" y2="36.30000000000001" stroke="#b07818" stroke-width="0.9"/>
<circle cx="103.69999999999999" cy="36.30000000000001" r="1.8" fill="#c8c8c8"/><circle cx="103.99999999999999" cy="36.000000000000014" r="1" fill="#fff"/>
<circle cx="108.69999999999999" cy="36.30000000000001" r="1.1" fill="#c00"/>
<circle cx="102.69999999999999" cy="41.30000000000001" r="1.0" fill="#a00"/>
<circle cx="103.69999999999999" cy="45.60000000000002" r="1.8" fill="#c8c8c8"/><circle cx="103.99999999999999" cy="45.300000000000026" r="1" fill="#fff"/>
<circle cx="108.69999999999999" cy="45.60000000000002" r="1.1" fill="#c00"/>
<circle cx="102.69999999999999" cy="50.60000000000002" r="1.0" fill="#a00"/>
<path d="M9 3L9 11H18" stroke="#aaa" stroke-width="0.6" fill="none"/><path d="M18 10L20 11L18 12Z M8 5L9 3L10 5Z" fill="#ddd"/>
<rect x="135" y="52" width="9" height="8" fill="#444"/><circle cx="137.5" cy="54" r="1.8" fill="#fff"/><rect x="135" y="56" width="4" height="4" fill="#e00"/><path d="M140 54H144M140 58H144" stroke="#fff" stroke-width="1"/>
</svg>
<div class="a cap" style="left:39px;top:420px">1250679::Picture 1</div>
<div class="a card" style="left:40px;top:446px;height:140px;background:#a8dec1;"></div>
<svg style="left:48px;top:486px" width="145" height="60" viewBox="0 0 145 60"><rect width="145" height="60" fill="#000"/>
<line x1="58.5" y1="8.6" x2="51.2" y2="16.4" stroke="#9a7020" stroke-width="0.8"/>
<line x1="58.5" y1="8.6" x2="72.2" y2="21.4" stroke="#9a7020" stroke-width="0.8"/>
<line x1="85.4" y1="8.6" x2="92.8" y2="16.4" stroke="#9a7020" stroke-width="0.8"/>
<line x1="85.4" y1="8.6" x2="72.2" y2="21.4" stroke="#9a7020" stroke-width="0.8"/>
<line x1="51.2" y1="16.4" x2="64" y2="29.6" stroke="#9a7020" stroke-width="0.8"/>
<line x1="92.8" y1="16.4" x2="80" y2="29.6" stroke="#9a7020" stroke-width="0.8"/>
<line x1="51.2" y1="43.8" x2="64" y2="29.6" stroke="#9a7020" stroke-width="0.8"/>
<line x1="92.8" y1="43.8" x2="80" y2="29.6" stroke="#9a7020" stroke-width="0.8"/>
<line x1="58.5" y1="50.7" x2="51.2" y2="43.8" stroke="#9a7020" stroke-width="0.8"/>
<line x1="58.5" y1="50.7" x2="72.2" y2="37.9" stroke="#9a7020" stroke-width="0.8"/>
<line x1="85.4" y1="50.7" x2="92.8" y2="43.8" stroke="#9a7020" stroke-width="0.8"/>
<line x1="85.4" y1="50.7" x2="72.2" y2="37.9" stroke="#9a7020" stroke-width="0.8"/>
<path d="M72.2 21.400000000000002L80.0 29.6L72.2 37.900000000000006L64.0 29.6Z M64.2 29.6Q72.2 26.6 80.2 29.6 M72.2 21.6Q70.2 29.6 72.2 37.6" fill="none" stroke="#d8a028" stroke-width="1.4"/>
<rect x="50.3" y="8.399999999999977" width="43.6" height="43.4" fill="none" stroke="#ccc" stroke-width="0.8"/>
<circle cx="65.8" cy="15" r="1.7" fill="#d00"/>
<circle cx="78.6" cy="15" r="1.7" fill="#d00"/>
<circle cx="56.7" cy="23.7" r="1.7" fill="#d00"/>
<circle cx="86.8" cy="23.7" r="1.7" fill="#d00"/>
<circle cx="56.7" cy="36.5" r="1.7" fill="#d00"/>
<circle cx="86.8" cy="36.5" r="1.7" fill="#d00"/>
<circle cx="65.8" cy="45.2" r="1.7" fill="#d00"/>
<circle cx="78.6" cy="45.2" r="1.7" fill="#d00"/>
<circle cx="58.5" cy="8.6" r="2.1" fill="#e6e6e6"/><circle cx="58.5" cy="8.6" r="2.1" fill="none" stroke="#c44" stroke-width="0.4"/>
<circle cx="85.4" cy="8.6" r="2.1" fill="#e6e6e6"/><circle cx="85.4" cy="8.6" r="2.1" fill="none" stroke="#c44" stroke-width="0.4"/>
<circle cx="51.2" cy="16.4" r="2.1" fill="#e6e6e6"/><circle cx="51.2" cy="16.4" r="2.1" fill="none" stroke="#c44" stroke-width="0.4"/>
<circle cx="92.8" cy="16.4" r="2.1" fill="#e6e6e6"/><circle cx="92.8" cy="16.4" r="2.1" fill="none" stroke="#c44" stroke-width="0.4"/>
<circle cx="72.2" cy="21.4" r="2.1" fill="#e6e6e6"/><circle cx="72.2" cy="21.4" r="2.1" fill="none" stroke="#c44" stroke-width="0.4"/>
<circle cx="64" cy="29.6" r="2.1" fill="#e6e6e6"/><circle cx="64" cy="29.6" r="2.1" fill="none" stroke="#c44" stroke-width="0.4"/>
<circle cx="80" cy="29.6" r="2.1" fill="#e6e6e6"/><circle cx="80" cy="29.6" r="2.1" fill="none" stroke="#c44" stroke-width="0.4"/>
<circle cx="72.2" cy="37.9" r="2.1" fill="#e6e6e6"/><circle cx="72.2" cy="37.9" r="2.1" fill="none" stroke="#c44" stroke-width="0.4"/>
<circle cx="51.2" cy="43.8" r="2.1" fill="#e6e6e6"/><circle cx="51.2" cy="43.8" r="2.1" fill="none" stroke="#c44" stroke-width="0.4"/>
<circle cx="92.8" cy="43.8" r="2.1" fill="#e6e6e6"/><circle cx="92.8" cy="43.8" r="2.1" fill="none" stroke="#c44" stroke-width="0.4"/>
<circle cx="58.5" cy="50.7" r="2.1" fill="#e6e6e6"/><circle cx="58.5" cy="50.7" r="2.1" fill="none" stroke="#c44" stroke-width="0.4"/>
<circle cx="85.4" cy="50.7" r="2.1" fill="#e6e6e6"/><circle cx="85.4" cy="50.7" r="2.1" fill="none" stroke="#c44" stroke-width="0.4"/>
<path d="M4 3L4 11H13" stroke="#aaa" stroke-width="0.6" fill="none"/><path d="M13 10L15 11L13 12Z M3 5L4 3L5 5Z" fill="#ddd"/>
<rect x="135" y="52" width="9" height="8" fill="#444"/><circle cx="137.5" cy="54" r="1.8" fill="#fff"/><rect x="135" y="56" width="4" height="4" fill="#e00"/><path d="M140 54H144M140 58H144" stroke="#fff" stroke-width="1"/>
</svg>
<div class="a cap" style="left:39px;top:590px">1252234::Picture 1</div>
<div class="a card" style="left:40px;top:616px;height:74px;background:#d8bef5;border-bottom:none"></div>
<svg style="left:48px;top:656px" width="145" height="34" viewBox="0 0 145 34"><rect width="145" height="34" fill="#000"/>
<rect x="50.400000000000006" y="8.200000000000045" width="43" height="40" fill="none" stroke="#ccc" stroke-width="0.8"/>
<line x1="79.5" y1="8.5" x2="72" y2="16" stroke="#9a7020" stroke-width="0.8"/>
<line x1="51.5" y1="21.5" x2="56" y2="14.5" stroke="#9a7020" stroke-width="0.8"/>
<line x1="51.5" y1="21.5" x2="56" y2="32" stroke="#9a7020" stroke-width="0.8"/>
<line x1="77" y1="21" x2="85" y2="32" stroke="#9a7020" stroke-width="0.8"/>
<line x1="79.5" y1="8.5" x2="85" y2="14" stroke="#9a7020" stroke-width="0.8"/>
<circle cx="56" cy="14.5" r="1.7" fill="#d00"/>
<circle cx="64" cy="18" r="1.7" fill="#d00"/>
<circle cx="67" cy="23" r="1.7" fill="#d00"/>
<circle cx="56" cy="32" r="1.7" fill="#d00"/>
<circle cx="77" cy="21" r="1.7" fill="#d00"/>
<circle cx="93" cy="24" r="1.7" fill="#d00"/>
<circle cx="85" cy="32" r="1.7" fill="#d00"/>
<circle cx="79.5" cy="8.5" r="2.1" fill="#e6e6e6"/>
<circle cx="72" cy="16" r="2.1" fill="#e6e6e6"/>
<circle cx="51.5" cy="21.5" r="2.1" fill="#e6e6e6"/>
<circle cx="65" cy="30" r="2.1" fill="#e6e6e6"/>
<circle cx="83" cy="28" r="2.1" fill="#e6e6e6"/>
<path d="M9 3L9 11H18" stroke="#aaa" stroke-width="0.6" fill="none"/><path d="M18 10L20 11L18 12Z M8 5L9 3L10 5Z" fill="#ddd"/>
</svg>
<div id="lscroll" class="a"></div>
<svg style="left:218px;top:106px" width="9" height="5"><path d="M0 5L4.5 0L9 5Z" fill="#303030"/></svg>
<div class="a" style="left:215px;top:118px;width:14px;height:16px;background:linear-gradient(90deg,#f4f4f4,#e0e0e0);border:1px solid #9a9a9a;border-radius:2px"></div>
<svg style="left:218px;top:682px" width="9" height="5"><path d="M0 0L4.5 5L9 0Z" fill="#303030"/></svg>
<div class="a" style="left:28px;top:690px;width:202px;height:21px;background:#2a3a57"></div>
<div class="a" style="left:94px;top:690px;width:67px;height:20px;background:#fcfcf8;border-radius:0 0 3px 3px"></div>
<div class="a" style="left:51px;top:693px;color:#fff;font-size:12.5px;letter-spacing:-0.2px">Navi...</div>
<div class="a" style="left:118px;top:693px;color:#000;font-size:12.5px;letter-spacing:-0.2px">Rece...</div>
<div class="a" style="left:186px;top:693px;color:#fff;font-size:12.5px;letter-spacing:-0.2px">Undo...</div>
<svg style="left:31px;top:692px" width="16" height="16" viewBox="0 0 16 16"><rect x="1.5" y="1.5" width="14" height="14" fill="#ffffff" stroke="#20356a"/><rect x="2" y="2" width="13" height="2" fill="#7aa4e4"/><path d="M3.5 5.5H5.5V12.5H8.5M5.5 8.5H8.5M5.5 10.5H8.5" fill="none" stroke="#707070"/><rect x="9" y="5.5" width="4" height="1" fill="#808080"/><rect x="9" y="7.5" width="4" height="1" fill="#808080"/><rect x="9" y="9.5" width="4" height="1" fill="#808080"/><rect x="9" y="11.5" width="4" height="1" fill="#808080"/></svg>
<svg style="left:99px;top:692px" width="16" height="16" viewBox="0 0 16 16"><rect x="1.5" y="1.5" width="14" height="14" fill="#ffffff" stroke="#20356a"/><rect x="2" y="2" width="13" height="2" fill="#7aa4e4"/><circle cx="9" cy="9" r="4.5" fill="#f4f4f4" stroke="#909090"/><path d="M9 6V9H11" stroke="#707070" fill="none"/><path d="M2 9L5 12L8 6" stroke="#30b030" stroke-width="2.2" fill="none"/></svg>
<svg style="left:166px;top:692px" width="16" height="16" viewBox="0 0 16 16"><rect x="1.5" y="1.5" width="14" height="14" fill="#ffffff" stroke="#20356a"/><rect x="2" y="2" width="13" height="2" fill="#7aa4e4"/><path d="M5 8Q6 5 9 6Q12 7 10 11Q9 13 7 13" fill="none" stroke="#3a70c8" stroke-width="2"/><path d="M3 6L7 6L4.5 10Z" fill="#3a70c8"/></svg>
<div id="doc" class="a"></div>
<div id="tbl" class="a"></div>
<div class="a" style="left:235px;top:81px;width:21px;height:253px;background:#f0f0f0;border-right:1px solid #a0a0a0;border-bottom:1px solid #a0a0a0"></div>
<svg style="left:240px;top:85px" width="11" height="11"><path d="M1.5 1.5L9.5 9.5M9.5 1.5L1.5 9.5" stroke="#7a7a7a" stroke-width="2.2"/></svg>
<svg style="left:240px;top:317px" width="11" height="11"><path d="M2 2L9 9M2 2H7M2 2V7" stroke="#7a7a7a" stroke-width="1.6" fill="none"/></svg>
<div class="a" style="left:256px;top:81px;width:703px;height:20px;background:linear-gradient(180deg,#fff,#f3f3f3);border-bottom:1px solid #d5d5d5"></div>
<div class="a" style="left:315px;top:82px;width:1px;height:18px;background:#e3e3e3"></div>
<div class="a" style="left:435px;top:82px;width:1px;height:18px;background:#e3e3e3"></div>
<div class="a" style="left:495px;top:82px;width:1px;height:18px;background:#e3e3e3"></div>
<div class="a" style="left:555px;top:82px;width:1px;height:18px;background:#e3e3e3"></div>
<div class="a" style="left:675px;top:82px;width:1px;height:18px;background:#e3e3e3"></div>
<div class="hd a" style="left:262px;top:85px">No.</div>
<div class="hd a" style="left:322px;top:85px">Title</div>
<div class="hd a" style="left:502px;top:85px">Code</div>
<div class="hd a" style="left:562px;top:85px">Formula sum</div>
<div class="hd a" style="left:682px;top:85px">H</div>
<div class="hd a" style="left:862px;top:85px">Cell parameters</div>
<div class="hd a" style="left:440px;top:85px;width:50px;text-align:right">Pics</div>
<div class="a" style="left:276px;top:102px;width:40px;height:19px;background:#a8d5fb"></div>
<svg style="left:261px;top:104px" width="13" height="13"><rect x="0" y="0" width="13" height="13" fill="#fff"/><path d="M0.5 0V13M3.5 0V13M6.5 0V13M9.5 0V13M12.5 0V13M0 0.5H13M0 3.5H13M0 6.5H13M0 9.5H13M0 12.5H13" stroke="#8a8a8a" stroke-width="1"/></svg>
<div class="a rt" style="left:277px;top:105px;color:#000">9</div>
<div class="a rt" style="left:322px;top:105px;color:#000">542477</div>
<div class="a rt" style="left:440px;top:105px;width:50px;text-align:right;color:#000">1</div>
<div class="a rt" style="left:502px;top:105px;color:#000">542477</div>
<div class="a rt" style="left:562px;top:105px;color:#000">O3V2</div>
<div class="a rt" style="left:682px;top:105px;color:#000">R</div>
<div class="a rt" style="left:800px;top:105px;width:50px;text-align:right;color:#000"></div>
<div class="a rt" style="left:862px;top:105px;color:#000">4.953,4.953,14.006,9</div>
<div class="a" style="left:276px;top:121px;width:40px;height:19px;background:#a8dec1"></div>
<svg style="left:261px;top:123px" width="13" height="13"><rect x="0" y="0" width="13" height="13" fill="#fff"/><path d="M0.5 0V13M3.5 0V13M6.5 0V13M9.5 0V13M12.5 0V13M0 0.5H13M0 3.5H13M0 6.5H13M0 9.5H13M0 12.5H13" stroke="#8a8a8a" stroke-width="1"/></svg>
<div class="a rt" style="left:277px;top:124px;color:#000">10</div>
<div class="a rt" style="left:322px;top:124px;color:#000">1250003</div>
<div class="a rt" style="left:440px;top:124px;width:50px;text-align:right;color:#000">1</div>
<div class="a rt" style="left:502px;top:124px;color:#000">1250003</div>
<div class="a rt" style="left:562px;top:124px;color:#000">O5V3</div>
<div class="a rt" style="left:682px;top:124px;color:#000">P</div>
<div class="a rt" style="left:800px;top:124px;width:50px;text-align:right;color:#000"></div>
<div class="a rt" style="left:862px;top:124px;color:#000">10.004,5.040,9.854,9</div>
<div class="a" style="left:276px;top:140px;width:40px;height:19px;background:#f6da64"></div>
<svg style="left:261px;top:142px" width="13" height="13"><rect x="0" y="0" width="13" height="13" fill="#fff"/><path d="M0.5 0V13M3.5 0V13M6.5 0V13M9.5 0V13M12.5 0V13M0 0.5H13M0 3.5H13M0 6.5H13M0 9.5H13M0 12.5H13" stroke="#8a8a8a" stroke-width="1"/></svg>
<div class="a rt" style="left:277px;top:143px;color:#000">11</div>
<div class="a rt" style="left:322px;top:143px;color:#000">1250092</div>
<div class="a rt" style="left:440px;top:143px;width:50px;text-align:right;color:#000">1</div>
<div class="a rt" style="left:502px;top:143px;color:#000">1250092</div>
<div class="a rt" style="left:562px;top:143px;color:#000">O7V4</div>
<div class="a rt" style="left:682px;top:143px;color:#000">A</div>
<div class="a rt" style="left:800px;top:143px;width:50px;text-align:right;color:#000"></div>
<div class="a rt" style="left:862px;top:143px;color:#000">5.509,7.008,12.256,9</div>
<div class="a" style="left:276px;top:159px;width:40px;height:19px;background:#d8bef5"></div>
<svg style="left:261px;top:161px" width="13" height="13"><rect x="0" y="0" width="13" height="13" fill="#fff"/><path d="M0.5 0V13M3.5 0V13M6.5 0V13M9.5 0V13M12.5 0V13M0 0.5H13M0 3.5H13M0 6.5H13M0 9.5H13M0 12.5H13" stroke="#8a8a8a" stroke-width="1"/></svg>
<div class="a rt" style="left:277px;top:162px;color:#000">12</div>
<div class="a rt" style="left:322px;top:162px;color:#000">1250093</div>
<div class="a rt" style="left:440px;top:162px;width:50px;text-align:right;color:#000">1</div>
<div class="a rt" style="left:502px;top:162px;color:#000">1250093</div>
<div class="a rt" style="left:562px;top:162px;color:#000">O7V4</div>
<div class="a rt" style="left:682px;top:162px;color:#000">A</div>
<div class="a rt" style="left:800px;top:162px;width:50px;text-align:right;color:#000"></div>
<div class="a rt" style="left:862px;top:162px;color:#000">5.503,6.997,12.256,9</div>
<div class="a" style="left:276px;top:178px;width:40px;height:19px;background:#a8d5fb"></div>
<svg style="left:261px;top:180px" width="13" height="13"><rect x="0" y="0" width="13" height="13" fill="#fff"/><path d="M0.5 0V13M3.5 0V13M6.5 0V13M9.5 0V13M12.5 0V13M0 0.5H13M0 3.5H13M0 6.5H13M0 9.5H13M0 12.5H13" stroke="#8a8a8a" stroke-width="1"/></svg>
<div class="a rt" style="left:277px;top:181px;color:#000">13</div>
<div class="a rt" style="left:322px;top:181px;color:#000">1250105</div>
<div class="a rt" style="left:440px;top:181px;width:50px;text-align:right;color:#000">1</div>
<div class="a rt" style="left:502px;top:181px;color:#000">1250105</div>
<div class="a rt" style="left:562px;top:181px;color:#000">O9V5</div>
<div class="a rt" style="left:682px;top:181px;color:#000">P</div>
<div class="a rt" style="left:800px;top:181px;width:50px;text-align:right;color:#000"></div>
<div class="a rt" style="left:862px;top:181px;color:#000">7.002,8.352,10.905,9</div>
<div class="a" style="left:276px;top:197px;width:40px;height:19px;background:#a8dec1"></div>
<svg style="left:261px;top:199px" width="13" height="13"><rect x="0" y="0" width="13" height="13" fill="#fff"/><path d="M0.5 0V13M3.5 0V13M6.5 0V13M9.5 0V13M12.5 0V13M0 0.5H13M0 3.5H13M0 6.5H13M0 9.5H13M0 12.5H13" stroke="#8a8a8a" stroke-width="1"/></svg>
<div class="a rt" style="left:277px;top:200px;color:#000">14</div>
<div class="a rt" style="left:322px;top:200px;color:#000">1250106</div>
<div class="a rt" style="left:440px;top:200px;width:50px;text-align:right;color:#000">1</div>
<div class="a rt" style="left:502px;top:200px;color:#000">1250106</div>
<div class="a rt" style="left:562px;top:200px;color:#000">O9V5</div>
<div class="a rt" style="left:682px;top:200px;color:#000">B1-</div>
<div class="a rt" style="left:800px;top:200px;width:50px;text-align:right;color:#000">2</div>
<div class="a rt" style="left:862px;top:200px;color:#000">7.005,8.363,10.983,9</div>
<div class="a" style="left:276px;top:216px;width:40px;height:19px;background:#f6da64"></div>
<svg style="left:261px;top:218px" width="13" height="13"><rect x="0" y="0" width="13" height="13" fill="#fff"/><path d="M0.5 0V13M3.5 0V13M6.5 0V13M9.5 0V13M12.5 0V13M0 0.5H13M0 3.5H13M0 6.5H13M0 9.5H13M0 12.5H13" stroke="#8a8a8a" stroke-width="1"/></svg>
<div class="a rt" style="left:277px;top:219px;color:#000">15</div>
<div class="a rt" style="left:322px;top:219px;color:#000">1250121</div>
<div class="a rt" style="left:440px;top:219px;width:50px;text-align:right;color:#000">1</div>
<div class="a rt" style="left:502px;top:219px;color:#000">1250121</div>
<div class="a rt" style="left:562px;top:219px;color:#000">O2V</div>
<div class="a rt" style="left:682px;top:219px;color:#000">C1-</div>
<div class="a rt" style="left:800px;top:219px;width:50px;text-align:right;color:#000">2</div>
<div class="a rt" style="left:862px;top:219px;color:#000">9.060,5.772,4.520,89</div>
<div class="a" style="left:276px;top:235px;width:683px;height:19px;background:#3399ff"></div>
<svg style="left:261px;top:237px" width="13" height="13"><rect x="0" y="0" width="13" height="13" fill="#a8d4ff"/><path d="M0.5 0V13M3.5 0V13M6.5 0V13M9.5 0V13M12.5 0V13M0 0.5H13M0 3.5H13M0 6.5H13M0 9.5H13M0 12.5H13" stroke="#4a6fa8" stroke-width="1"/></svg>
<div class="a rt" style="left:277px;top:238px;color:#fff">16</div>
<div class="a rt" style="left:322px;top:238px;color:#fff">1250180</div>
<div class="a rt" style="left:440px;top:238px;width:50px;text-align:right;color:#fff">1</div>
<div class="a rt" style="left:502px;top:238px;color:#fff">1250180</div>
<div class="a rt" style="left:562px;top:238px;color:#fff">O2V</div>
<div class="a rt" style="left:682px;top:238px;color:#fff">C 1 2/m 1</div>
<div class="a rt" style="left:800px;top:238px;width:50px;text-align:right;color:#fff">12</div>
<div class="a rt" style="left:862px;top:238px;color:#fff">12.093,3.702,6.433,9</div>
<div class="a" style="left:276px;top:254px;width:40px;height:19px;background:#a8d5fb"></div>
<svg style="left:261px;top:256px" width="13" height="13"><rect x="0" y="0" width="13" height="13" fill="#fff"/><path d="M0.5 0V13M3.5 0V13M6.5 0V13M9.5 0V13M12.5 0V13M0 0.5H13M0 3.5H13M0 6.5H13M0 9.5H13M0 12.5H13" stroke="#8a8a8a" stroke-width="1"/></svg>
<div class="a rt" style="left:277px;top:257px;color:#000">17</div>
<div class="a rt" style="left:322px;top:257px;color:#000">1250679</div>
<div class="a rt" style="left:440px;top:257px;width:50px;text-align:right;color:#000">1</div>
<div class="a rt" style="left:502px;top:257px;color:#000">1250679</div>
<div class="a rt" style="left:562px;top:257px;color:#000">O13V6</div>
<div class="a rt" style="left:682px;top:257px;color:#000">C m m a</div>
<div class="a rt" style="left:800px;top:257px;width:50px;text-align:right;color:#000">67</div>
<div class="a rt" style="left:862px;top:257px;color:#000">11.922,19.912,3.680</div>
<div class="a" style="left:276px;top:273px;width:40px;height:19px;background:#a8dec1"></div>
<svg style="left:261px;top:275px" width="13" height="13"><rect x="0" y="0" width="13" height="13" fill="#fff"/><path d="M0.5 0V13M3.5 0V13M6.5 0V13M9.5 0V13M12.5 0V13M0 0.5H13M0 3.5H13M0 6.5H13M0 9.5H13M0 12.5H13" stroke="#8a8a8a" stroke-width="1"/></svg>
<div class="a rt" style="left:277px;top:276px;color:#000">18</div>
<div class="a rt" style="left:322px;top:276px;color:#000">1252234</div>
<div class="a rt" style="left:440px;top:276px;width:50px;text-align:right;color:#000">1</div>
<div class="a rt" style="left:502px;top:276px;color:#000">1252234</div>
<div class="a rt" style="left:562px;top:276px;color:#000">O2V</div>
<div class="a rt" style="left:682px;top:276px;color:#000">P 42/n c m</div>
<div class="a rt" style="left:800px;top:276px;width:50px;text-align:right;color:#000">138</div>
<div class="a rt" style="left:862px;top:276px;color:#000">8.434,8.434,7.678,90</div>
<div class="a" style="left:276px;top:292px;width:40px;height:19px;background:#f6da64"></div>
<svg style="left:261px;top:294px" width="13" height="13"><rect x="0" y="0" width="13" height="13" fill="#fff"/><path d="M0.5 0V13M3.5 0V13M6.5 0V13M9.5 0V13M12.5 0V13M0 0.5H13M0 3.5H13M0 6.5H13M0 9.5H13M0 12.5H13" stroke="#8a8a8a" stroke-width="1"/></svg>
<div class="a rt" style="left:277px;top:295px;color:#000">19</div>
<div class="a rt" style="left:322px;top:295px;color:#000">1252235</div>
<div class="a rt" style="left:440px;top:295px;width:50px;text-align:right;color:#000">1</div>
<div class="a rt" style="left:502px;top:295px;color:#000">1252235</div>
<div class="a rt" style="left:562px;top:295px;color:#000">O2V</div>
<div class="a rt" style="left:682px;top:295px;color:#000">P 4/n c c</div>
<div class="a rt" style="left:800px;top:295px;width:50px;text-align:right;color:#000">130</div>
<div class="a rt" style="left:862px;top:295px;color:#000">8.440,8.440,7.666,90</div>
<div class="a" style="left:276px;top:311px;width:40px;height:19px;background:#d8bef5"></div>
<svg style="left:261px;top:313px" width="13" height="13"><rect x="0" y="0" width="13" height="13" fill="#fff"/><path d="M0.5 0V13M3.5 0V13M6.5 0V13M9.5 0V13M12.5 0V13M0 0.5H13M0 3.5H13M0 6.5H13M0 9.5H13M0 12.5H13" stroke="#8a8a8a" stroke-width="1"/></svg>
<div class="a rt" style="left:277px;top:314px;color:#000">20</div>
<div class="a rt" style="left:322px;top:314px;color:#000">1252236</div>
<div class="a rt" style="left:440px;top:314px;width:50px;text-align:right;color:#000">1</div>
<div class="a rt" style="left:502px;top:314px;color:#000">1252236</div>
<div class="a rt" style="left:562px;top:314px;color:#000">O2V</div>
<div class="a rt" style="left:682px;top:314px;color:#000">I 4/m</div>
<div class="a rt" style="left:800px;top:314px;width:50px;text-align:right;color:#000">87</div>
<div class="a rt" style="left:862px;top:314px;color:#000">8.476,8.476,3.824,90</div>
<div class="a" style="left:235px;top:339px;width:724px;height:28px;background:#f0f0f0;border-top:1px solid #a8a8a8;border-left:1px solid #a8a8a8"></div>
<div class="a" style="left:236px;top:364px;width:723px;height:3px;background:linear-gradient(180deg,#cdb6e8,#d9c2f3)"></div>
<svg style="left:241px;top:350px" width="11" height="9"><rect x="0" y="0" width="4" height="3" fill="#777"/><rect x="6" y="0" width="4" height="3" fill="#777"/><rect x="0" y="5" width="4" height="3" fill="#777"/><rect x="6" y="5" width="4" height="3" fill="#777"/></svg>
<div class="a" style="left:260px;top:342px;width:155px;height:23px;background:linear-gradient(180deg,#ede2f8,#d6bff1);border:1px solid #a8a8a8;border-bottom:none;box-shadow:inset 1px 1px 0 #fff"></div>
<div class="a" style="left:288px;top:348px;font-size:11.5px;letter-spacing:-0.35px">1250180 :: Picture 1</div>
<div class="a" style="left:421px;top:344px;width:37px;height:20px;background:linear-gradient(180deg,#fbfbfb,#e9e9e9);border:1px solid #b8b8b8"></div>
<div class="a" style="left:440px;top:345px;width:1px;height:18px;background:#d0d0d0"></div>
<svg style="left:445px;top:351px" width="7" height="4"><path d="M0 0H7L3.5 4Z" fill="#9a9a9a"/></svg>
<svg style="left:424px;top:346px" width="16" height="16"><rect x="3.5" y="4.5" width="11" height="10" fill="#fff" stroke="#3a5a8a"/><rect x="4" y="5" width="10" height="2.5" fill="#5a8ad0"/><circle cx="4" cy="4" r="3" fill="#f8e860"/></svg>
<div id="pic" class="a"></div>
<svg style="left:0;top:0" width="959" height="766" viewBox="0 0 959 766">
<defs>
<radialGradient id="gw" cx="0.55" cy="0.4" r="0.6" fx="0.62" fy="0.35"><stop offset="0" stop-color="#ffffff"/><stop offset="0.35" stop-color="#e8e8e8"/><stop offset="0.8" stop-color="#bdbdbd"/><stop offset="1" stop-color="#9a9a9a"/></radialGradient>
<radialGradient id="gr" cx="0.5" cy="0.45" r="0.6" fx="0.6" fy="0.3"><stop offset="0" stop-color="#ff9090"/><stop offset="0.2" stop-color="#ff1010"/><stop offset="0.75" stop-color="#e00000"/><stop offset="1" stop-color="#900000"/></radialGradient>
</defs>
<circle cx="505" cy="492" r="9" fill="url(#gr)"/>
<circle cx="659" cy="481" r="9" fill="url(#gr)"/>
<circle cx="578" cy="570" r="9" fill="url(#gr)"/>
<circle cx="725" cy="492" r="9" fill="url(#gr)"/>
<circle cx="513" cy="560" r="9" fill="url(#gr)"/>
<circle cx="732" cy="560" r="9" fill="url(#gr)"/>
<line x1="523" y1="415" x2="516" y2="477" stroke="#e4a424" stroke-width="3"/>
<line x1="439" y1="483" x2="516" y2="477" stroke="#e4a424" stroke-width="3"/>
<line x1="431" y1="485" x2="501" y2="576" stroke="#e4a424" stroke-width="3"/>
<line x1="516" y1="477" x2="587" y2="568" stroke="#e4a424" stroke-width="3"/>
<line x1="501" y1="576" x2="587" y2="568" stroke="#e4a424" stroke-width="3"/>
<line x1="501" y1="576" x2="495" y2="638" stroke="#e4a424" stroke-width="3"/>
<line x1="583" y1="493" x2="650" y2="485" stroke="#e4a424" stroke-width="3"/>
<line x1="650" y1="485" x2="587" y2="568" stroke="#e4a424" stroke-width="3"/>
<line x1="587" y1="568" x2="654" y2="559" stroke="#e4a424" stroke-width="3"/>
<line x1="743" y1="415" x2="737" y2="476" stroke="#e4a424" stroke-width="3"/>
<line x1="650" y1="485" x2="737" y2="476" stroke="#e4a424" stroke-width="3"/>
<line x1="737" y1="476" x2="808" y2="567" stroke="#e4a424" stroke-width="3"/>
<line x1="650" y1="485" x2="721" y2="576" stroke="#e4a424" stroke-width="3"/>
<line x1="721" y1="576" x2="799" y2="569" stroke="#e4a424" stroke-width="3"/>
<line x1="721" y1="576" x2="715" y2="638" stroke="#e4a424" stroke-width="3"/>
<circle cx="431" cy="485" r="14" fill="url(#gw)"/>
<circle cx="516" cy="477" r="14" fill="url(#gw)"/>
<circle cx="501" cy="576" r="14" fill="url(#gw)"/>
<circle cx="587" cy="568" r="14" fill="url(#gw)"/>
<circle cx="650" cy="485" r="14" fill="url(#gw)"/>
<circle cx="737" cy="476" r="14" fill="url(#gw)"/>
<circle cx="721" cy="576" r="14" fill="url(#gw)"/>
<circle cx="808" cy="567" r="14" fill="url(#gw)"/>
<circle cx="427" cy="415" r="9.2" fill="url(#gr)"/>
<circle cx="523" cy="415" r="9.2" fill="url(#gr)"/>
<circle cx="646" cy="415" r="9.2" fill="url(#gr)"/>
<circle cx="743" cy="415" r="9.2" fill="url(#gr)"/>
<circle cx="439" cy="483" r="9.2" fill="url(#gr)"/>
<circle cx="583" cy="493" r="9.2" fill="url(#gr)"/>
<circle cx="804" cy="493" r="9.2" fill="url(#gr)"/>
<circle cx="434" cy="559" r="9.2" fill="url(#gr)"/>
<circle cx="654" cy="559" r="9.2" fill="url(#gr)"/>
<circle cx="799" cy="569" r="9.2" fill="url(#gr)"/>
<circle cx="495" cy="638" r="9.2" fill="url(#gr)"/>
<circle cx="591" cy="638" r="9.2" fill="url(#gr)"/>
<circle cx="715" cy="638" r="9.2" fill="url(#gr)"/>
<circle cx="811" cy="638" r="9.2" fill="url(#gr)"/>
<path d="M365.5 414.5H805.5L872.5 638.5H433.5Z" fill="none" stroke="#fff" stroke-width="1.2"/>
<path d="M291.5 424L283.5 397M291.5 424H320" stroke="#d8d8d8" stroke-width="0.9" fill="none"/>
<path d="M281.5 388L287.5 398L281 399Z" fill="#f0f0f0"/><path d="M330 424L318 420L318 428Z" fill="#f0f0f0"/>
<text x="272.5" y="383.5" fill="#e0e0e0" font-size="10.5" style="font-family:Liberation Sans">c</text>
<text x="338" y="427" fill="#e0e0e0" font-size="10.5" style="font-family:Liberation Sans">a</text>
</svg>
<div class="a" style="left:693px;top:80px;width:172px;height:114px;background:rgba(0,0,0,0.18);filter:blur(2px)"></div>
<div class="a" style="left:690px;top:76px;width:172px;height:115px;background:#e9ecf0;border:1px solid #a7abb0"></div>
<div class="a" style="left:691px;top:77px;width:27px;height:113px;background:#e4e8ed;border-right:1px solid #dde1e6"></div>
<div class="a" style="left:693px;top:167px;width:166px;height:21px;border:1px solid #e3c77c;border-radius:3px;background:linear-gradient(180deg,#fffbea,#fff0c4 45%,#fde6a4)"></div>
<div class="a" style="left:727px;top:83px;font-size:12px;letter-spacing:-0.35px;color:#000">1250180 :: Picture 1</div>
<div class="a" style="left:727px;top:105px;font-size:12px;letter-spacing:-0.35px;color:#000">1250679 :: Picture 1</div>
<div class="a" style="left:727px;top:127px;font-size:12px;letter-spacing:-0.35px;color:#000">1252234 :: Picture 1</div>
<div class="a" style="left:727px;top:149px;font-size:12px;letter-spacing:-0.35px;color:#000">1252236 :: Picture 1</div>
<div class="a" style="left:727px;top:171px;font-size:12px;letter-spacing:-0.35px;color:#000">1252235 :: Picture 1</div>
<div class="a" style="left:690px;top:55px;width:33px;height:22px;background:linear-gradient(180deg,#f2f4f7,#e9ecf0);border:1px solid #a7abb0;border-bottom:none"></div>
<svg style="left:696px;top:57px" width="16" height="16" viewBox="0 0 16 16"><circle cx="9.5" cy="8.5" r="5.5" fill="#f2f2f2" stroke="#a0a0a0" stroke-width="1.2"/><path d="M9.5 5V8.5H12" stroke="#7a7a7a" fill="none"/><path d="M2 9L4.5 12L7.5 5" stroke="#30b030" stroke-width="2.4" fill="none"/></svg>
<svg style="left:714px;top:65px" width="5" height="3" viewBox="0 0 5 3"><path d="M0 0H5L2.5 3Z" fill="#1a2a48"/></svg>
<div class="a" style="left:235px;top:686px;width:724px;height:26px;background:#f0f0f0;border-top:1px solid #fff"></div>
<div class="a" style="left:278px;top:689px;width:118px;height:21px;background:#a8d8b9;border:1px solid #c8c8c8;outline:1px solid #fff;outline-offset:-2px"></div>
<div class="a" style="left:284px;top:694px;font-size:11.5px;letter-spacing:-0.35px;white-space:nowrap">1250106 :: Picture 1</div>
<div class="a" style="left:398px;top:689px;width:117px;height:21px;background:#f2d665;border:1px solid #c8c8c8;outline:1px solid #fff;outline-offset:-2px"></div>
<div class="a" style="left:404px;top:694px;font-size:11.5px;letter-spacing:-0.35px;white-space:nowrap">1250121 :: Picture 1</div>
<div class="a" style="left:517px;top:689px;width:116px;height:21px;background:#a8d3f8;border:1px solid #c8c8c8;outline:1px solid #fff;outline-offset:-2px"></div>
<div class="a" style="left:523px;top:694px;font-size:11.5px;letter-spacing:-0.35px;white-space:nowrap">1250679 :: Picture 1</div>
<div class="a" style="left:635px;top:689px;width:116px;height:21px;background:#a8d8b9;border:1px solid #c8c8c8;outline:1px solid #fff;outline-offset:-2px"></div>
<div class="a" style="left:641px;top:694px;font-size:11.5px;letter-spacing:-0.35px;white-space:nowrap">1252234 :: Picture 1</div>
<div class="a" style="left:754px;top:689px;width:117px;height:21px;background:#f2d665;border:1px solid #c8c8c8;outline:1px solid #fff;outline-offset:-2px"></div>
<div class="a" style="left:760px;top:694px;font-size:11.5px;letter-spacing:-0.35px;white-space:nowrap">1252235 :: Picture 1</div>
<div class="a" style="left:873px;top:689px;width:90px;height:21px;background:#d8bef5;border:1px solid #c8c8c8;outline:1px solid #fff;outline-offset:-2px"></div>
<div class="a" style="left:879px;top:694px;font-size:11.5px;letter-spacing:-0.35px;white-space:nowrap">1252236 :: Pi...</div>
<div class="a" style="left:236px;top:689px;width:15px;height:21px;background:linear-gradient(90deg,#fafafa,#e8e8e8);border:1px solid #c0c0c0"></div>
<svg style="left:239px;top:692px" width="9" height="15"><path d="M0.5 6L4.5 1L8.5 6Z M0.5 9L4.5 14L8.5 9Z" fill="#8a8a8a"/></svg>
<div class="a" style="left:253px;top:689px;width:21px;height:21px;background:linear-gradient(90deg,#fafafa,#ececec);border:1px solid #c0c0c0"></div>
<svg style="left:258px;top:695px" width="11" height="9"><rect x="0.5" y="0.5" width="10" height="8" fill="#fff" stroke="#888"/><path d="M0 4.5H11M3.5 0V9M7 0V9" stroke="#888"/></svg>
<div id="tb2" class="a"></div>
<div class="a tbar" style="left:7px;top:713px;width:699px;height:25px"></div>
<div class="a tbar" style="left:705px;top:713px;width:242px;height:25px"></div>
<div class="a tbar" style="left:947px;top:713px;width:20px;height:25px"></div>
<div class="a" style="left:693px;top:714px;width:12px;height:23px;background:linear-gradient(180deg,#dfe4ec,#c9d0dc)"></div>
<div class="a" style="left:933px;top:714px;width:12px;height:23px;background:linear-gradient(180deg,#dfe4ec,#c9d0dc)"></div>
<div class="a" style="left:713px;top:715px;width:22px;height:22px;background:linear-gradient(180deg,#fff6d8,#ffe6a0);border:1px solid #e0c070;border-radius:2px"></div>
<div class="a grip" style="left:12px;top:719px"></div>
<div class="a grip" style="left:709px;top:719px"></div>
<div class="a grip" style="left:952px;top:719px"></div>
<svg style="left:19px;top:719px" width="16" height="16" viewBox="0 0 16 16"><rect x="1.5" y="2.5" width="14" height="12" fill="#fff8e0" stroke="#7090c0"/><rect x="2" y="3" width="13" height="2" fill="#8ab0e8"/><circle cx="8" cy="9" r="3.5" fill="none" stroke="#e8c020" stroke-width="2" stroke-dasharray="3 1.5"/></svg>
<svg style="left:41px;top:719px" width="16" height="16" viewBox="0 0 16 16"><rect x="0.5" y="1.5" width="13" height="11" fill="#ffffff" stroke="#000"/><rect x="1" y="2" width="12" height="2" fill="#1e2a68"/><path d="M3 5.5H9M3 7.5H9M3 9.5H7" stroke="#000"/><path d="M7 10.5H11V8.5L15 12L11 15.5V13.5H7Z" fill="#40c8e8" stroke="#2090b0" stroke-width="0.6"/></svg>
<svg style="left:63px;top:719px" width="16" height="16" viewBox="0 0 16 16"><circle cx="3" cy="8" r="2.2" fill="#f0e020" stroke="#303030" stroke-width="0.5"/><circle cx="3" cy="13" r="2.2" fill="#f0e020" stroke="#303030" stroke-width="0.5"/><circle cx="6.5" cy="10.5" r="2.2" fill="#808020"/><path d="M7 3L14 11" stroke="#1a2a68" stroke-width="2.2"/><path d="M6 2L8 4" stroke="#f0e020" stroke-width="2"/><path d="M12 1L13 3L11 2ZM14 4H15" stroke="#000" stroke-width="0.8"/></svg>
<svg style="left:85px;top:719px" width="16" height="16" viewBox="0 0 16 16"><rect x="0.5" y="1.5" width="14" height="12" fill="#ffffff" stroke="#000"/><rect x="1" y="2" width="13" height="2" fill="#1e2a68"/><path d="M3 14L9 8" stroke="#602010" stroke-width="2"/><path d="M7 5L11 3L14 7L11 9Z" fill="#f0e040" stroke="#806010" stroke-width="0.7"/></svg>
<svg style="left:125px;top:719px" width="16" height="16" viewBox="0 0 16 16"><path d="M2 9L8 3L14 8L9 14Z" fill="#e0d880" stroke="#000" stroke-width="1.2"/><path d="M2 9L5 12L4 14" fill="none" stroke="#000" stroke-width="1.2"/><path d="M8 3L14 8L12 10L6 5Z" fill="#707070"/></svg>
<svg style="left:146px;top:719px" width="16" height="16" viewBox="0 0 16 16"><circle cx="4.5" cy="7" r="3" fill="#f0f020" stroke="#000" stroke-width="1.1"/><circle cx="11.5" cy="7" r="3" fill="#f0f020" stroke="#000" stroke-width="1.1"/><circle cx="4.5" cy="12.5" r="3" fill="#f0f020" stroke="#000" stroke-width="1.1"/><circle cx="11.5" cy="12.5" r="3" fill="#f0f020" stroke="#000" stroke-width="1.1"/><path d="M2 2H6M4 0V4" stroke="#000" stroke-width="1.2"/></svg>
<svg style="left:168px;top:719px" width="16" height="16" viewBox="0 0 16 16"><path d="M1 9H7M4 6V12" stroke="#000" stroke-width="1.5"/><circle cx="11.5" cy="9" r="3.5" fill="#f0f020" stroke="#000" stroke-width="1.1"/></svg>
<svg style="left:190px;top:719px" width="16" height="16" viewBox="0 0 16 16"><path d="M5 5Q5 1 8 1Q11 1 11 4Q11 6 8 7V9" fill="none" stroke="#000" stroke-width="1.5"/><circle cx="3" cy="13" r="2.3" fill="#fff" stroke="#000"/><circle cx="13" cy="13" r="2.3" fill="#fff" stroke="#000"/><path d="M8 10.5V12" stroke="#000" stroke-width="1.5"/></svg>
<svg style="left:212px;top:719px" width="16" height="16" viewBox="0 0 16 16"><rect x="2" y="2" width="12" height="12" fill="none" stroke="#1030c0" stroke-width="1.4"/><path d="M2 2L14 14M14 2L2 14" stroke="#1030c0" stroke-width="1.2"/><circle cx="2" cy="2" r="1.8" fill="#fff" stroke="#000" stroke-width="0.8"/><circle cx="14" cy="2" r="1.8" fill="#fff" stroke="#000" stroke-width="0.8"/><circle cx="2" cy="14" r="1.8" fill="#fff" stroke="#000" stroke-width="0.8"/><circle cx="14" cy="14" r="1.8" fill="#fff" stroke="#000" stroke-width="0.8"/></svg>
<svg style="left:234px;top:719px" width="16" height="16" viewBox="0 0 16 16"><circle cx="8" cy="4" r="2.5" fill="none" stroke="#9aa0a8" stroke-width="1.2"/><path d="M7 6.5L4.5 9.5M9 6.5L11.5 9.5" stroke="#9aa0a8" stroke-width="1.2"/><circle cx="4" cy="12" r="2.8" fill="none" stroke="#9aa0a8" stroke-width="1.2"/><circle cx="12" cy="12" r="2.8" fill="none" stroke="#9aa0a8" stroke-width="1.2"/></svg>
<svg style="left:257px;top:719px" width="16" height="16" viewBox="0 0 16 16"><circle cx="8" cy="8" r="6.5" fill="#fff" stroke="#000" stroke-dasharray="1.2 1"/><circle cx="8" cy="8" r="4.5" fill="#707010" stroke="#000" stroke-width="0.8"/></svg>
<svg style="left:295px;top:719px" width="16" height="16" viewBox="0 0 16 16"><path d="M4.5 2L11.5 2L15 8L11.5 14H4.5L1 8Z" fill="none" stroke="#1030e0" stroke-width="2"/></svg>
<svg style="left:317px;top:719px" width="16" height="16" viewBox="0 0 16 16"><path d="M4.5 2H11.5L15 8L11.5 14" fill="none" stroke="#f0f020" stroke-width="2"/><path d="M11.5 14H4.5L1 8L4.5 2" fill="none" stroke="#1030e0" stroke-width="2"/></svg>
<svg style="left:340px;top:719px" width="16" height="16" viewBox="0 0 16 16"><rect x="2.5" y="4.5" width="10" height="8" fill="none" stroke="#8a8a8a" stroke-width="1.2"/><path d="M1 4L4 1.5H11L14 4" fill="none" stroke="#1030d0" stroke-width="1.6"/><path d="M2 4H14" stroke="#1030d0" stroke-width="1.3"/><path d="M4 9H9L12 11L15 13L12 15H6L3 13" fill="none" stroke="#1030d0" stroke-width="1.6"/><path d="M4.5 6.5H11" stroke="#8a8a8a"/></svg>
<svg style="left:361px;top:719px" width="16" height="16" viewBox="0 0 16 16"><path d="M1 1.5L4 4.5L7 1.5M1 7.5L4 4.5M9 1.5L12 4.5L15 1.5M15 7.5L12 4.5M1 14.5L4 11.5L7 14.5M1 8.5L4 11.5M9 14.5L12 11.5L15 14.5M15 8.5L12 11.5" stroke="#1020d0" stroke-width="1.6" fill="none"/><path d="M4 4.5L12 11.5M12 4.5L4 11.5" stroke="#000" stroke-width="1.8"/><rect x="3" y="3.5" width="2" height="2" fill="#000"/><rect x="11" y="3.5" width="2" height="2" fill="#000"/><rect x="3" y="10.5" width="2" height="2" fill="#000"/><rect x="11" y="10.5" width="2" height="2" fill="#000"/></svg>
<svg style="left:384px;top:719px" width="16" height="16" viewBox="0 0 16 16"><path d="M1 1.5L4 4.5L7 1.5M1 7.5L4 4.5M9 1.5L12 4.5L15 1.5M15 7.5L12 4.5M1 14.5L4 11.5L7 14.5M1 8.5L4 11.5M9 14.5L12 11.5L15 14.5M15 8.5L12 11.5" stroke="#d04020" stroke-width="1.6" fill="none"/><path d="M4 4.5L12 11.5M12 4.5L4 11.5" stroke="#000" stroke-width="1.8"/><rect x="3" y="3.5" width="2" height="2" fill="#000"/><rect x="11" y="3.5" width="2" height="2" fill="#000"/><rect x="3" y="10.5" width="2" height="2" fill="#000"/><rect x="11" y="10.5" width="2" height="2" fill="#000"/></svg>
<svg style="left:410px;top:719px" width="16" height="16" viewBox="0 0 16 16"><circle cx="12" cy="4" r="3.3" fill="#f0f020" stroke="#000"/><path d="M10 6L5 11" stroke="#000" stroke-width="1.4"/><circle cx="4" cy="12" r="2.6" fill="#e0e8f8" stroke="#1a3a88"/></svg>
<svg style="left:432px;top:719px" width="16" height="16" viewBox="0 0 16 16"><path d="M2.5 2.5L6 6.5H10L13.5 2.5M2.5 13.5L6 9.5H10L13.5 13.5M6 6.5L4 8L6 9.5M10 6.5L12 8L10 9.5" stroke="#000" stroke-width="1.5" fill="none"/><rect x="0.5" y="0.5" width="4" height="3" fill="#f0f020"/><rect x="11.5" y="0.5" width="4" height="3" fill="#f0f020"/><rect x="0.5" y="12.5" width="4" height="3" fill="#f0f020"/><rect x="11.5" y="12.5" width="4" height="3" fill="#f0f020"/><path d="M1 8H4M12 8H15" stroke="#1030c0" stroke-width="1.4"/></svg>
<svg style="left:456px;top:719px" width="16" height="16" viewBox="0 0 16 16"><path d="M6 2L10 0.8L14 3L10 5.5L6 4.5Z" fill="none" stroke="#f0f020" stroke-width="1.2"/><path d="M1 10L5 7.5H10L14 10L10 13H5Z" fill="none" stroke="#000" stroke-width="1.3"/></svg>
<svg style="left:478px;top:719px" width="16" height="16" viewBox="0 0 16 16"><path d="M6 2.5L9 0.8L13 2.5L13 5L9 7L6 5Z" fill="none" stroke="#9aa0a8" stroke-width="1.1"/><path d="M1 10L5 7.5H10L14 10L10 13H5Z" fill="none" stroke="#9aa0a8" stroke-width="1.1"/></svg>
<svg style="left:505px;top:719px" width="16" height="16" viewBox="0 0 16 16"><rect x="1.5" y="1.5" width="13" height="13" fill="none" stroke="#1030c0" stroke-width="1.5"/><rect x="4.5" y="4.5" width="7" height="7" fill="none" stroke="#1030c0" stroke-width="1"/><path d="M1.5 1.5L4.5 4.5M14.5 1.5L11.5 4.5M1.5 14.5L4.5 11.5M14.5 14.5L11.5 11.5" stroke="#1030c0"/></svg>
<svg style="left:528px;top:719px" width="16" height="16" viewBox="0 0 16 16"><path d="M8 1L15 8L8 15L1 8Z M1 8H15M8 1V15" fill="none" stroke="#8a929c" stroke-width="1.1"/></svg>
<svg style="left:549px;top:719px" width="16" height="16" viewBox="0 0 16 16"><path d="M1 8L4 4H12L15 8L12 12H4Z" fill="none" stroke="#000" stroke-width="1.3"/><path d="M2 3L14 13M14 3L2 13" stroke="#e02020" stroke-width="2.2"/></svg>
<svg style="left:582px;top:719px" width="16" height="16" viewBox="0 0 16 16"><circle cx="4" cy="12" r="3" fill="none" stroke="#9aa0a8" stroke-width="1.1"/><text x="7" y="8" font-size="8" font-weight="bold" fill="#9aa0a8" style="font-family:Liberation Sans">Fe</text></svg>
<svg style="left:610px;top:719px" width="16" height="16" viewBox="0 0 16 16"><rect x="0.5" y="0.5" width="15" height="15" fill="#c8d8f0" stroke="#000070"/><path d="M8 2L11 5H9V11H11L8 14L5 11H7V5H5Z M2 8L5 5V7H11V5L14 8L11 11V9H5V11Z" fill="#000"/><circle cx="8" cy="8" r="2" fill="#f0f020"/></svg>
<svg style="left:650px;top:719px" width="16" height="16" viewBox="0 0 16 16"><text x="0" y="14" font-size="15" font-weight="bold" font-style="italic" fill="#1a30a0" style="font-family:Liberation Serif">M</text></svg>
<svg style="left:671px;top:719px" width="16" height="16" viewBox="0 0 16 16"><rect x="0.5" y="0.5" width="15" height="15" fill="#e8ecf8" stroke="#1a2a68"/><circle cx="6.5" cy="7" r="3.5" fill="#e05050"/><circle cx="9.5" cy="9.5" r="3.5" fill="#109080"/></svg>
<svg style="left:716px;top:719px" width="16" height="16" viewBox="0 0 16 16"><path d="M4.5 1.5V13.5L7 11L9.5 15.5L11 14.5L9 10.5H12.5Z" fill="#fff" stroke="#000" stroke-width="1.1"/></svg>
<svg style="left:738px;top:719px" width="16" height="16" viewBox="0 0 16 16"><path d="M8 0.5L10.5 3H9V13H10.5L8 15.5L5.5 13H7V3H5.5Z M0.5 8L3 5.5V7H13V5.5L15.5 8L13 10.5V9H3V10.5Z" fill="#000"/><circle cx="8" cy="8" r="3.5" fill="none" stroke="#000" stroke-width="1.4"/></svg>
<svg style="left:761px;top:719px" width="16" height="16" viewBox="0 0 16 16"><path d="M13 8A5 5 0 1 1 9 3" fill="none" stroke="#000" stroke-width="2.2"/><path d="M8 0L12 3L8 6Z" fill="#000"/></svg>
<svg style="left:782px;top:719px" width="16" height="16" viewBox="0 0 16 16"><path d="M8 0.5L11 3.5H9V7H12.5V5L15.5 8L12.5 11V9H9V12.5H11L8 15.5L5 12.5H7V9H3.5V11L0.5 8L3.5 5V7H7V3.5H5Z" fill="#000"/></svg>
<svg style="left:804px;top:719px" width="16" height="16" viewBox="0 0 16 16"><path d="M1 5V1H5M11 1H15V5M15 11V15H11M5 15H1V11" fill="none" stroke="#000" stroke-width="1.4"/><path d="M3 3L6 6M13 3L10 6M3 13L6 10M13 13L10 10" stroke="#000" stroke-width="1.3"/><rect x="6" y="6" width="4" height="4" fill="none" stroke="#000"/></svg>
<svg style="left:826px;top:719px" width="16" height="16" viewBox="0 0 16 16"><path d="M1 8L14 2M1 8L14 14" stroke="#000" stroke-width="1.6"/><path d="M12 6V10" stroke="#000" stroke-width="1.3"/></svg>
<svg style="left:848px;top:719px" width="16" height="16" viewBox="0 0 16 16"><path d="M1 13H15M3 13L8 4L13 13M5 9H11M8 1V4" fill="none" stroke="#000" stroke-width="1.4"/><path d="M5 7L8 3L11 7" fill="none" stroke="#000" stroke-width="1.3"/></svg>
<svg style="left:870px;top:719px" width="16" height="16" viewBox="0 0 16 16"><circle cx="8" cy="8" r="6" fill="none" stroke="#000" stroke-width="1.4" stroke-dasharray="1.5 1.2"/><circle cx="8" cy="8" r="2.5" fill="#000"/><circle cx="4" cy="8" r="1.3" fill="#000"/><circle cx="12" cy="8" r="1.3" fill="#000"/></svg>
<svg style="left:892px;top:719px" width="16" height="16" viewBox="0 0 16 16"><rect x="1" y="1" width="6" height="6" fill="none" stroke="#9aa0a8" stroke-width="1.3"/><circle cx="6" cy="5" r="2" fill="#9aa0a8"/><path d="M9 7V15M12 7V15" stroke="#b8bcc2" stroke-width="2"/></svg>
<svg style="left:914px;top:719px" width="16" height="16" viewBox="0 0 16 16"><rect x="1" y="1" width="6" height="6" fill="none" stroke="#9aa0a8" stroke-width="1.3"/><circle cx="6" cy="5" r="2" fill="#9aa0a8"/><rect x="7" y="7" width="8" height="8" fill="#9aa0a8"/></svg>
<div class="a sep" style="left:117px;top:718px;height:18px"></div>
<div class="a sep" style="left:289px;top:718px;height:18px"></div>
<div class="a sep" style="left:404px;top:718px;height:18px"></div>
<div class="a sep" style="left:498px;top:718px;height:18px"></div>
<div class="a sep" style="left:603px;top:718px;height:18px"></div>
<div class="a sep" style="left:642px;top:718px;height:18px"></div>
<svg style="left:105px;top:726px" width="5" height="3" viewBox="0 0 5 3"><path d="M0 0H5L2.5 3Z" fill="#1a2a48"/></svg>
<svg style="left:277px;top:726px" width="5" height="3" viewBox="0 0 5 3"><path d="M0 0H5L2.5 3Z" fill="#1a2a48"/></svg>
<svg style="left:570px;top:726px" width="5" height="3" viewBox="0 0 5 3"><path d="M0 0H5L2.5 3Z" fill="#1a2a48"/></svg>
<svg style="left:631px;top:726px" width="5" height="3" viewBox="0 0 5 3"><path d="M0 0H5L2.5 3Z" fill="#1a2a48"/></svg>
<svg style="left:696px;top:727px" width="7" height="8" viewBox="0 0 7 8"><path d="M0 1H7M0 4H7L3.5 8Z" stroke="#1a2a48" fill="#1a2a48" stroke-width="1"/></svg>
<svg style="left:937px;top:727px" width="7" height="8" viewBox="0 0 7 8"><path d="M0 1H7M0 4H7L3.5 8Z" stroke="#1a2a48" fill="#1a2a48" stroke-width="1"/></svg>
<div id="status" class="a"><div class="t a">Go back to this recently edited structure picture</div></div>
<div class="a" style="left:791px;top:742px;width:1px;height:16px;background:#c8d0dc"></div>
<div class="a" style="left:818px;top:742px;width:1px;height:16px;background:#c8d0dc"></div>
<div class="a" style="left:846px;top:742px;width:1px;height:16px;background:#c8d0dc"></div>
<div class="a" style="left:875px;top:742px;width:1px;height:16px;background:#c8d0dc"></div>
<div class="a" style="left:853px;top:742px;color:#fff;font-size:12px;letter-spacing:-0.2px">Blar</div>
<div class="a" style="left:877px;top:742px;width:82px;height:16px;background:linear-gradient(180deg,#dde4ee,#cdd6e2)"></div>
<div class="a" style="left:880px;top:742px;color:#000;font-size:12.5px">Manual</div>
<div class="a" style="left:957px;top:638px;width:2px;height:48px;background:#a8a8a8"></div>
<div id="frameB" class="a"></div>
</body></html>
